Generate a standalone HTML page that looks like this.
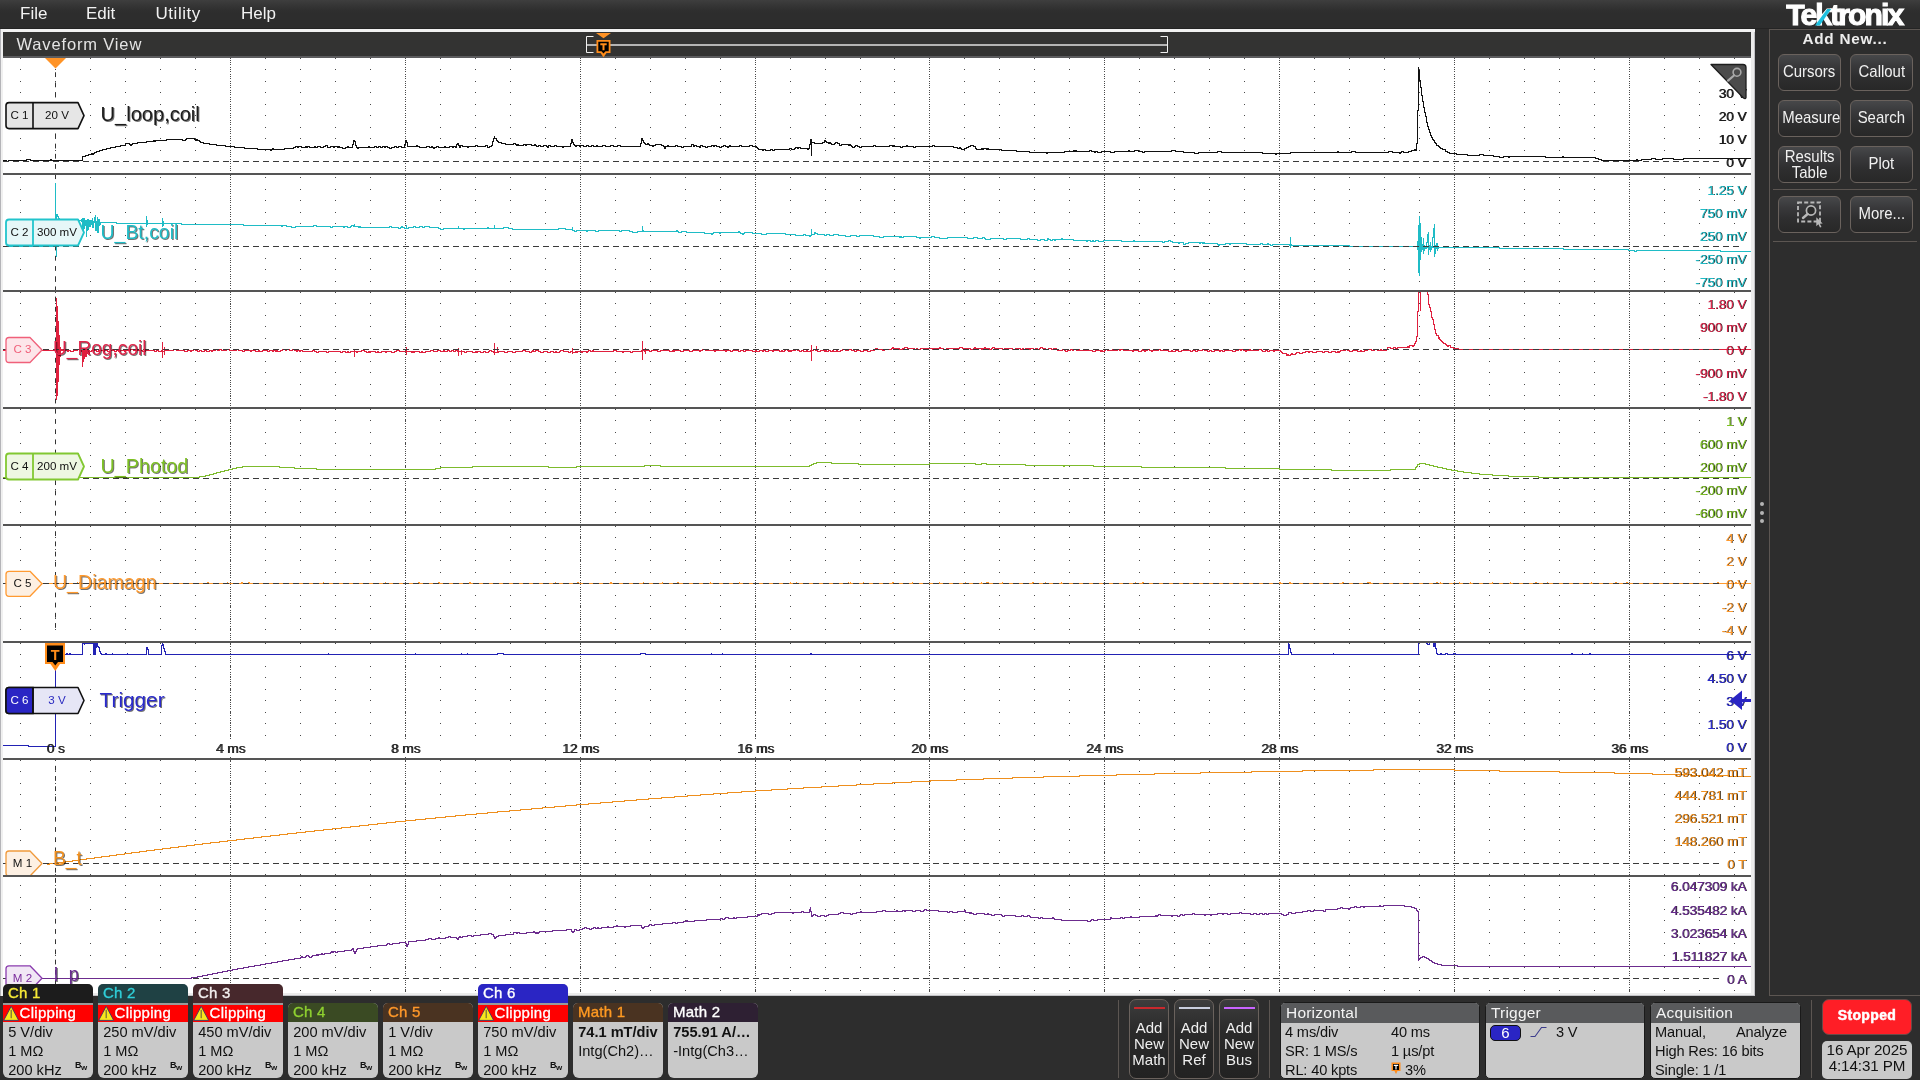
<!DOCTYPE html>
<html><head><meta charset="utf-8"><title>Waveform View</title>
<style>
html,body{margin:0;padding:0}
body{width:1920px;height:1080px;overflow:hidden;position:relative;background:#2d2d2d;font-family:"Liberation Sans", sans-serif;}
div,span{box-sizing:border-box}
body>div,body>svg{will-change:transform}
.abs{position:absolute}
svg text{font-family:"Liberation Sans", sans-serif;}
.yl{font-size:13.7px;letter-spacing:-0.1px}
.sh{filter:drop-shadow(0.75px 0.75px 0 rgba(0,0,0,0.9))}
.bt{font-size:11.6px;}
.gd{stroke:#4a4a4a;stroke-width:1;fill:none;shape-rendering:crispEdges}
.nm{font-size:20.4px}

#menubar{position:absolute;left:0;top:0;width:1920px;height:29px;border-bottom:1px solid #242424;background:linear-gradient(#3e3e3e 0,#363636 5px,#2f2f2f 10px,#2d2d2d 13px,#2d2d2d 100%);}
#menubar span{position:absolute;top:4px;font-size:17px;color:#f2f2f2;line-height:20px;}
#wfborder{position:absolute;left:0;top:29px;width:1755px;height:967px;background:#ececec;border-top:3px solid #f2f2f2;border-left:3px solid #f0f0f0;box-shadow:inset 1px 0 0 #d8d8dc,inset -1px -1px 0 #c2c2c6}
#wfedge{position:absolute;left:0;top:29px;width:1px;height:967px;background:#b4b4b8}
#wftitle{position:absolute;left:3px;top:32px;width:1748px;height:26px;background:#333332;border-bottom:2px solid #5c5c5e;}
#wftitle .t{position:absolute;left:13.5px;top:2px;font-size:16.5px;color:#e4e4e4;line-height:20px;letter-spacing:0.85px}
#side{position:absolute;left:1769px;top:29px;width:160px;height:967px;border:1px solid #5c5652;background:#2d2d2d;}
.sbtn{position:absolute;width:63px;height:37px;border:1px solid #6a625d;border-radius:6px;background:linear-gradient(#47484a,#39393b 30%,#2e2e2f 62%,#282828);color:#f0f0f0;font-size:16.6px;text-align:center;line-height:33px;}
.sbtn span{display:inline-block;transform:scaleX(0.9);transform-origin:50% 50%;white-space:nowrap}
.sep{position:absolute;background:#5c5652;}
.chb{position:absolute;width:90px;border-radius:5px 5px 6px 6px;background:#c9c9c9;overflow:hidden;}
.chb .h{position:absolute;left:0;top:0;width:90px;font-size:15px;line-height:17px;padding-left:5px;letter-spacing:0.25px;-webkit-text-stroke:0.35px}
.chb .clip{position:absolute;left:0;width:90px;height:17px;background:#ff0000;color:#fff;font-size:15px;line-height:15px;padding-left:16.5px;letter-spacing:0.3px;-webkit-text-stroke:0.3px #fff}
.chb .r{position:absolute;left:5.2px;font-size:14.6px;line-height:18px;color:#111;white-space:nowrap}
.chb .bw{position:absolute;left:72px;font-size:9px;color:#111;font-weight:bold;letter-spacing:-0.5px}
.abtn{position:absolute;top:999px;width:40px;height:80px;border:1px solid #6a625d;border-radius:7px;background:linear-gradient(#3d3d3d,#2a2a2a 40%,#222);color:#efefef;font-size:15px;line-height:16px;text-align:center;padding-top:20px;}
.abtn i{position:absolute;left:4px;top:7px;width:31px;height:2px;display:block}
.info{position:absolute;top:1002px;height:77px;border-radius:5px;background:#c9c9c9;overflow:hidden;border:1px solid #1a1a1a}
.info .h{position:absolute;left:0;top:0;width:100%;height:20px;background:#595a5c;color:#f4f4f4;font-size:15.5px;line-height:19px;padding-left:5px;letter-spacing:0.2px}
.info .r{position:absolute;letter-spacing:-0.15px;font-size:14.6px;line-height:18px;color:#111;white-space:nowrap}

</style></head>
<body>
<div id="menubar"><span style="left:20px">File</span><span style="left:86px">Edit</span><span style="left:155.5px;letter-spacing:0.55px">Utility</span><span style="left:241px">Help</span></div>
<div id="wfborder"></div><div id="wfedge"></div>
<div id="wftitle"><span class="t">Waveform View</span></div>
<svg class="abs" style="left:580px;top:32px" width="600" height="26" viewBox="580 32 600 26">
<rect x="586" y="44" width="582" height="2" fill="#b4b4b4"/>
<path d="M593.5 36.5H586.5V52.5H593.5" fill="none" stroke="#f0f0f0" stroke-width="1"/>
<path d="M1160.5 36.5H1167.5V52.5H1160.5" fill="none" stroke="#f0f0f0" stroke-width="1"/>
<path d="M596 33H611L603.5 38.3Z" fill="#ff9326"/>
<path d="M596.5 40H610.5V53H606.5L603.5 57.3L600.5 53H596.5Z" fill="#ff8c1a"/>
<path d="M598.3 41.7H608.7V51.3H605.5L603.5 53.5L601.5 51.3H598.3Z" fill="#000"/>
<path d="M600.3 43.3H606.7V45.2H604.5V50.3H602.5V45.2H600.3Z" fill="#ff8c1a"/>
</svg>
<div id="side"></div>
<svg class="abs" style="left:1780px;top:0" width="130" height="29" viewBox="1780 0 130 29">
<text x="1786.3" y="25" font-size="29.8" font-weight="bold" fill="#fff" stroke="#fff" stroke-width="1.1" letter-spacing="-1.9" textLength="116" lengthAdjust="spacingAndGlyphs">Tektronix</text>
<path d="M1815 25.6L1827.2 9H1831.2L1819.7 25.6Z" fill="#1cc0e0"/>
</svg>
<div class="abs" style="left:1770px;top:30px;width:150px;text-align:center;font-size:15.3px;font-weight:bold;color:#ededed;line-height:18px;letter-spacing:0.75px">Add New...</div>
<div class="sbtn" style="left:1778px;top:54px;"><span>Cursors</span></div>
<div class="sbtn" style="left:1850px;top:54px;"><span>Callout</span></div>
<div class="sbtn" style="left:1778px;top:100px;"><span>Measure</span></div>
<div class="sbtn" style="left:1850px;top:100px;"><span>Search</span></div>
<div class="sbtn" style="left:1778px;top:146px;line-height:16px;padding-top:1.5px;"><span>Results<br>Table</span></div>
<div class="sbtn" style="left:1850px;top:146px;"><span>Plot</span></div>
<div class="sbtn" style="left:1778px;top:196px;"><span></span></div>
<div class="sbtn" style="left:1850px;top:196px;"><span>More...</span></div>
<div class="sep" style="left:1773px;top:189px;width:144px;height:1px"></div>
<div class="sep" style="left:1773px;top:241px;width:144px;height:1px"></div>
<svg class="abs" style="left:1795px;top:200px" width="30" height="30" viewBox="0 0 30 30">
<rect x="3" y="2.5" width="22" height="19" fill="none" stroke="#b8b8b8" stroke-width="1.8" stroke-dasharray="4 2.2"/>
<circle cx="16" cy="10.5" r="4.6" fill="#2a2a2a" stroke="#b8b8b8" stroke-width="1.7"/>
<line x1="12.6" y1="14" x2="8" y2="18" stroke="#b8b8b8" stroke-width="2.4" stroke-linecap="round"/>
<path d="M21.3 17.3V26.2L23.4 24.3L25 27.6L26.5 26.9L24.9 23.7L27.7 23.5Z" fill="#b8b8b8"/>
</svg>
<div class="abs" style="left:1760px;top:502px;width:4px;height:4px;border-radius:2px;background:#b4b4b4"></div>
<div class="abs" style="left:1760px;top:510.5px;width:4px;height:4px;border-radius:2px;background:#b4b4b4"></div>
<div class="abs" style="left:1760px;top:519px;width:4px;height:4px;border-radius:2px;background:#b4b4b4"></div>
<svg id="plot" width="1920" height="1080" viewBox="0 0 1920 1080" style="position:absolute;left:0;top:0">
<defs><clipPath id="pc"><rect x="3" y="58" width="1748" height="935"/></clipPath></defs>
<rect x="3" y="58" width="1748" height="935" fill="#fff"/>
<g clip-path="url(#pc)">
<defs><path id="gr" d="M20 0.5h1M55 0.5h1M90 0.5h1M125 0.5h1M160 0.5h1M195 0.5h1M230 0.5h1M265 0.5h1M300 0.5h1M335 0.5h1M370 0.5h1M405 0.5h1M440 0.5h1M475 0.5h1M510 0.5h1M545 0.5h1M580 0.5h1M615 0.5h1M650 0.5h1M685 0.5h1M720 0.5h1M755 0.5h1M790 0.5h1M825 0.5h1M860 0.5h1M894 0.5h1M929 0.5h1M964 0.5h1M999 0.5h1M1034 0.5h1M1069 0.5h1M1104 0.5h1M1139 0.5h1M1174 0.5h1M1209 0.5h1M1244 0.5h1M1279 0.5h1M1314 0.5h1M1349 0.5h1M1384 0.5h1M1419 0.5h1M1454 0.5h1M1489 0.5h1M1524 0.5h1M1559 0.5h1M1594 0.5h1M1629 0.5h1M1664 0.5h1M1699 0.5h1M1734 0.5h1" class="gd"/></defs>
<use href="#gr" y="58"/>
<use href="#gr" y="69"/>
<use href="#gr" y="81"/>
<use href="#gr" y="92"/>
<use href="#gr" y="104"/>
<use href="#gr" y="115"/>
<use href="#gr" y="127"/>
<use href="#gr" y="138"/>
<use href="#gr" y="150"/>
<use href="#gr" y="177"/>
<use href="#gr" y="189"/>
<use href="#gr" y="200"/>
<use href="#gr" y="212"/>
<use href="#gr" y="223"/>
<use href="#gr" y="235"/>
<use href="#gr" y="258"/>
<use href="#gr" y="269"/>
<use href="#gr" y="281"/>
<use href="#gr" y="292"/>
<use href="#gr" y="303"/>
<use href="#gr" y="315"/>
<use href="#gr" y="326"/>
<use href="#gr" y="338"/>
<use href="#gr" y="361"/>
<use href="#gr" y="372"/>
<use href="#gr" y="384"/>
<use href="#gr" y="395"/>
<use href="#gr" y="409"/>
<use href="#gr" y="420"/>
<use href="#gr" y="432"/>
<use href="#gr" y="443"/>
<use href="#gr" y="455"/>
<use href="#gr" y="466"/>
<use href="#gr" y="489"/>
<use href="#gr" y="501"/>
<use href="#gr" y="512"/>
<use href="#gr" y="526"/>
<use href="#gr" y="537"/>
<use href="#gr" y="549"/>
<use href="#gr" y="560"/>
<use href="#gr" y="572"/>
<use href="#gr" y="595"/>
<use href="#gr" y="606"/>
<use href="#gr" y="618"/>
<use href="#gr" y="629"/>
<use href="#gr" y="643"/>
<use href="#gr" y="654"/>
<use href="#gr" y="666"/>
<use href="#gr" y="677"/>
<use href="#gr" y="689"/>
<use href="#gr" y="700"/>
<use href="#gr" y="712"/>
<use href="#gr" y="723"/>
<use href="#gr" y="735"/>
<use href="#gr" y="760"/>
<use href="#gr" y="771"/>
<use href="#gr" y="783"/>
<use href="#gr" y="794"/>
<use href="#gr" y="806"/>
<use href="#gr" y="817"/>
<use href="#gr" y="829"/>
<use href="#gr" y="840"/>
<use href="#gr" y="852"/>
<use href="#gr" y="874"/>
<use href="#gr" y="885"/>
<use href="#gr" y="897"/>
<use href="#gr" y="909"/>
<use href="#gr" y="920"/>
<use href="#gr" y="932"/>
<use href="#gr" y="943"/>
<use href="#gr" y="955"/>
<use href="#gr" y="967"/>
<use href="#gr" y="990"/>
<defs><path id="gv" d="M0.5 58v1M0.5 60v1M0.5 62v1M0.5 64v1M0.5 67v1M0.5 69v1M0.5 71v1M0.5 74v1M0.5 76v1M0.5 78v1M0.5 81v1M0.5 83v1M0.5 85v1M0.5 87v1M0.5 90v1M0.5 92v1M0.5 94v1M0.5 97v1M0.5 99v1M0.5 101v1M0.5 104v1M0.5 106v1M0.5 108v1M0.5 110v1M0.5 113v1M0.5 115v1M0.5 117v1M0.5 120v1M0.5 122v1M0.5 124v1M0.5 127v1M0.5 129v1M0.5 131v1M0.5 133v1M0.5 136v1M0.5 138v1M0.5 140v1M0.5 143v1M0.5 145v1M0.5 147v1M0.5 150v1M0.5 152v1M0.5 154v1M0.5 156v1M0.5 159v1M0.5 161v1M0.5 163v1M0.5 166v1M0.5 168v1M0.5 170v1M0.5 173v1M0.5 175v1M0.5 177v1M0.5 179v1M0.5 182v1M0.5 184v1M0.5 186v1M0.5 189v1M0.5 191v1M0.5 193v1M0.5 196v1M0.5 198v1M0.5 200v1M0.5 202v1M0.5 205v1M0.5 207v1M0.5 209v1M0.5 212v1M0.5 214v1M0.5 216v1M0.5 219v1M0.5 221v1M0.5 223v1M0.5 225v1M0.5 228v1M0.5 230v1M0.5 232v1M0.5 235v1M0.5 237v1M0.5 239v1M0.5 242v1M0.5 244v1M0.5 246v1M0.5 248v1M0.5 251v1M0.5 253v1M0.5 255v1M0.5 258v1M0.5 260v1M0.5 262v1M0.5 265v1M0.5 267v1M0.5 269v1M0.5 271v1M0.5 274v1M0.5 276v1M0.5 278v1M0.5 281v1M0.5 283v1M0.5 285v1M0.5 288v1M0.5 290v1M0.5 292v1M0.5 294v1M0.5 297v1M0.5 299v1M0.5 301v1M0.5 304v1M0.5 306v1M0.5 308v1M0.5 311v1M0.5 313v1M0.5 315v1M0.5 317v1M0.5 320v1M0.5 322v1M0.5 324v1M0.5 327v1M0.5 329v1M0.5 331v1M0.5 334v1M0.5 336v1M0.5 338v1M0.5 340v1M0.5 343v1M0.5 345v1M0.5 347v1M0.5 350v1M0.5 352v1M0.5 354v1M0.5 357v1M0.5 359v1M0.5 361v1M0.5 363v1M0.5 366v1M0.5 368v1M0.5 370v1M0.5 373v1M0.5 375v1M0.5 377v1M0.5 380v1M0.5 382v1M0.5 384v1M0.5 386v1M0.5 389v1M0.5 391v1M0.5 393v1M0.5 396v1M0.5 398v1M0.5 400v1M0.5 403v1M0.5 405v1M0.5 407v1M0.5 409v1M0.5 412v1M0.5 414v1M0.5 416v1M0.5 419v1M0.5 421v1M0.5 423v1M0.5 426v1M0.5 428v1M0.5 430v1M0.5 432v1M0.5 435v1M0.5 437v1M0.5 439v1M0.5 442v1M0.5 444v1M0.5 446v1M0.5 449v1M0.5 451v1M0.5 453v1M0.5 455v1M0.5 458v1M0.5 460v1M0.5 462v1M0.5 465v1M0.5 467v1M0.5 469v1M0.5 472v1M0.5 474v1M0.5 476v1M0.5 478v1M0.5 481v1M0.5 483v1M0.5 485v1M0.5 488v1M0.5 490v1M0.5 492v1M0.5 495v1M0.5 497v1M0.5 499v1M0.5 501v1M0.5 504v1M0.5 506v1M0.5 508v1M0.5 511v1M0.5 513v1M0.5 515v1M0.5 518v1M0.5 520v1M0.5 522v1M0.5 524v1M0.5 527v1M0.5 529v1M0.5 531v1M0.5 534v1M0.5 536v1M0.5 538v1M0.5 541v1M0.5 543v1M0.5 545v1M0.5 547v1M0.5 550v1M0.5 552v1M0.5 554v1M0.5 557v1M0.5 559v1M0.5 561v1M0.5 564v1M0.5 566v1M0.5 568v1M0.5 570v1M0.5 573v1M0.5 575v1M0.5 577v1M0.5 580v1M0.5 582v1M0.5 584v1M0.5 587v1M0.5 589v1M0.5 591v1M0.5 593v1M0.5 596v1M0.5 598v1M0.5 600v1M0.5 603v1M0.5 605v1M0.5 607v1M0.5 610v1M0.5 612v1M0.5 614v1M0.5 616v1M0.5 619v1M0.5 621v1M0.5 623v1M0.5 626v1M0.5 628v1M0.5 630v1M0.5 633v1M0.5 635v1M0.5 637v1M0.5 639v1M0.5 642v1M0.5 644v1M0.5 646v1M0.5 649v1M0.5 651v1M0.5 653v1M0.5 656v1M0.5 658v1M0.5 660v1M0.5 662v1M0.5 665v1M0.5 667v1M0.5 669v1M0.5 672v1M0.5 674v1M0.5 676v1M0.5 679v1M0.5 681v1M0.5 683v1M0.5 685v1M0.5 688v1M0.5 690v1M0.5 692v1M0.5 695v1M0.5 697v1M0.5 699v1M0.5 702v1M0.5 704v1M0.5 706v1M0.5 708v1M0.5 711v1M0.5 713v1M0.5 715v1M0.5 718v1M0.5 720v1M0.5 722v1M0.5 725v1M0.5 727v1M0.5 729v1M0.5 731v1M0.5 734v1M0.5 736v1M0.5 738v1M0.5 741v1M0.5 743v1M0.5 745v1M0.5 748v1M0.5 750v1M0.5 752v1M0.5 754v1M0.5 757v1M0.5 759v1M0.5 761v1M0.5 764v1M0.5 766v1M0.5 768v1M0.5 771v1M0.5 773v1M0.5 775v1M0.5 777v1M0.5 780v1M0.5 782v1M0.5 784v1M0.5 787v1M0.5 789v1M0.5 791v1M0.5 794v1M0.5 796v1M0.5 798v1M0.5 800v1M0.5 803v1M0.5 805v1M0.5 807v1M0.5 810v1M0.5 812v1M0.5 814v1M0.5 817v1M0.5 819v1M0.5 821v1M0.5 823v1M0.5 826v1M0.5 828v1M0.5 830v1M0.5 833v1M0.5 835v1M0.5 837v1M0.5 840v1M0.5 842v1M0.5 844v1M0.5 846v1M0.5 849v1M0.5 851v1M0.5 853v1M0.5 856v1M0.5 858v1M0.5 860v1M0.5 863v1M0.5 865v1M0.5 867v1M0.5 869v1M0.5 872v1M0.5 874v1M0.5 876v1M0.5 879v1M0.5 881v1M0.5 883v1M0.5 886v1M0.5 888v1M0.5 890v1M0.5 892v1M0.5 895v1M0.5 897v1M0.5 899v1M0.5 902v1M0.5 904v1M0.5 906v1M0.5 909v1M0.5 911v1M0.5 913v1M0.5 915v1M0.5 918v1M0.5 920v1M0.5 922v1M0.5 925v1M0.5 927v1M0.5 929v1M0.5 932v1M0.5 934v1M0.5 936v1M0.5 938v1M0.5 941v1M0.5 943v1M0.5 945v1M0.5 948v1M0.5 950v1M0.5 952v1M0.5 955v1M0.5 957v1M0.5 959v1M0.5 961v1M0.5 964v1M0.5 966v1M0.5 968v1M0.5 971v1M0.5 973v1M0.5 975v1M0.5 978v1M0.5 980v1M0.5 982v1M0.5 984v1M0.5 987v1M0.5 989v1M0.5 991v1" class="gd"/></defs>
<use href="#gv" x="230"/>
<use href="#gv" x="405"/>
<use href="#gv" x="580"/>
<use href="#gv" x="755"/>
<use href="#gv" x="929"/>
<use href="#gv" x="1104"/>
<use href="#gv" x="1279"/>
<use href="#gv" x="1454"/>
<use href="#gv" x="1629"/>
<path d="M55.5 72.25V77.05M55.5 82.45V87.25M55.5 92.65V97.45M55.5 102.85V107.65M55.5 113.05V117.85M55.5 123.25V128.05M55.5 133.45V138.25M55.5 143.65V148.45M55.5 153.85V158.65M55.5 164.05V168.85M55.5 174.25V179.05M55.5 184.45V189.25M55.5 194.65V199.45M55.5 204.85V209.65M55.5 215.05V219.85M55.5 225.25V230.05M55.5 235.45V240.25M55.5 245.65V250.45M55.5 255.85V260.65M55.5 266.05V270.85M55.5 276.25V281.05M55.5 286.45V291.25M55.5 296.65V301.45M55.5 306.85V311.65M55.5 317.05V321.85M55.5 327.25V332.05M55.5 337.45V342.25M55.5 347.65V352.45M55.5 357.85V362.65M55.5 368.05V372.85M55.5 378.25V383.05M55.5 388.45V393.25M55.5 398.65V403.45M55.5 408.85V413.65M55.5 419.05V423.85M55.5 429.25V434.05M55.5 439.45V444.25M55.5 449.65V454.45M55.5 459.85V464.65M55.5 470.05V474.85M55.5 480.25V485.05M55.5 490.45V495.25M55.5 500.65V505.45M55.5 510.85V515.65M55.5 521.05V525.85M55.5 531.25V536.05M55.5 541.45V546.25M55.5 551.65V556.45M55.5 561.85V566.65M55.5 572.05V576.85M55.5 582.25V587.05M55.5 592.45V597.25M55.5 602.65V607.45M55.5 612.85V617.65M55.5 623.05V627.85M55.5 765.85V770.65M55.5 776.05V780.85M55.5 786.25V791.05M55.5 796.45V801.25M55.5 806.65V811.45M55.5 816.85V821.65M55.5 827.05V831.85M55.5 837.25V842.05M55.5 847.45V852.25M55.5 857.65V862.45M55.5 867.85V872.65M55.5 878.05V882.85M55.5 888.25V893.05M55.5 898.45V903.25M55.5 908.65V913.45M55.5 918.85V923.65M55.5 929.05V933.85M55.5 939.25V944.05M55.5 949.45V954.25M55.5 959.65V964.45M55.5 969.85V974.65M55.5 980.05V984.85" stroke="#333" stroke-width="1" fill="none"/>
<line x1="3" y1="161.5" x2="1740" y2="161.5" stroke="#3a3a3a" stroke-width="1" stroke-dasharray="5.5 4.5" shape-rendering="crispEdges"/>
<line x1="3" y1="246.5" x2="1740" y2="246.5" stroke="#3a3a3a" stroke-width="1" stroke-dasharray="5.5 4.5" shape-rendering="crispEdges"/>
<line x1="3" y1="349.5" x2="1740" y2="349.5" stroke="#3a3a3a" stroke-width="1" stroke-dasharray="5.5 4.5" shape-rendering="crispEdges"/>
<line x1="3" y1="478.5" x2="1740" y2="478.5" stroke="#3a3a3a" stroke-width="1" stroke-dasharray="5.5 4.5" shape-rendering="crispEdges"/>
<line x1="3" y1="583.5" x2="1740" y2="583.5" stroke="#3a3a3a" stroke-width="1" stroke-dasharray="5.5 4.5" shape-rendering="crispEdges"/>
<line x1="3" y1="863.5" x2="1740" y2="863.5" stroke="#3a3a3a" stroke-width="1" stroke-dasharray="5.5 4.5" shape-rendering="crispEdges"/>
<line x1="3" y1="978.5" x2="1740" y2="978.5" stroke="#3a3a3a" stroke-width="1" stroke-dasharray="5.5 4.5" shape-rendering="crispEdges"/>
<rect x="1713.5" y="85.1" width="37.8" height="16" fill="#fff"/>
<rect x="1713.5" y="108.1" width="37.8" height="16" fill="#fff"/>
<rect x="1713.5" y="131.1" width="37.8" height="16" fill="#fff"/>
<rect x="1721.0" y="154.1" width="30.3" height="16" fill="#fff"/>
<rect x="1702.3" y="182.1" width="49.0" height="16" fill="#fff"/>
<rect x="1694.7" y="205.1" width="56.6" height="16" fill="#fff"/>
<rect x="1694.7" y="228.1" width="56.6" height="16" fill="#fff"/>
<rect x="1690.2" y="251.1" width="61.1" height="16" fill="#fff"/>
<rect x="1690.2" y="274.1" width="61.1" height="16" fill="#fff"/>
<rect x="1702.3" y="296.1" width="49.0" height="16" fill="#fff"/>
<rect x="1694.7" y="319.1" width="56.6" height="16" fill="#fff"/>
<rect x="1721.0" y="342.1" width="30.3" height="16" fill="#fff"/>
<rect x="1690.2" y="365.1" width="61.1" height="16" fill="#fff"/>
<rect x="1697.8" y="388.1" width="53.5" height="16" fill="#fff"/>
<rect x="1721.0" y="413.1" width="30.3" height="16" fill="#fff"/>
<rect x="1694.7" y="436.1" width="56.6" height="16" fill="#fff"/>
<rect x="1694.7" y="459.1" width="56.6" height="16" fill="#fff"/>
<rect x="1690.2" y="482.1" width="61.1" height="16" fill="#fff"/>
<rect x="1690.2" y="505.1" width="61.1" height="16" fill="#fff"/>
<rect x="1721.0" y="530.1" width="30.3" height="16" fill="#fff"/>
<rect x="1721.0" y="553.1" width="30.3" height="16" fill="#fff"/>
<rect x="1721.0" y="576.1" width="30.3" height="16" fill="#fff"/>
<rect x="1716.6" y="599.1" width="34.7" height="16" fill="#fff"/>
<rect x="1716.6" y="622.1" width="34.7" height="16" fill="#fff"/>
<rect x="1721.0" y="647.1" width="30.3" height="16" fill="#fff"/>
<rect x="1702.3" y="670.1" width="49.0" height="16" fill="#fff"/>
<rect x="1721.0" y="693.1" width="30.3" height="16" fill="#fff"/>
<rect x="1702.3" y="716.1" width="49.0" height="16" fill="#fff"/>
<rect x="1721.0" y="739.1" width="30.3" height="16" fill="#fff"/>
<rect x="1669.2" y="764.1" width="82.1" height="16" fill="#fff"/>
<rect x="1669.2" y="787.1" width="82.1" height="16" fill="#fff"/>
<rect x="1669.2" y="810.1" width="82.1" height="16" fill="#fff"/>
<rect x="1669.2" y="833.1" width="82.1" height="16" fill="#fff"/>
<rect x="1722.1" y="856.1" width="29.2" height="16" fill="#fff"/>
<rect x="1665.5" y="878.1" width="85.8" height="16" fill="#fff"/>
<rect x="1665.5" y="902.1" width="85.8" height="16" fill="#fff"/>
<rect x="1665.5" y="925.1" width="85.8" height="16" fill="#fff"/>
<rect x="1666.5" y="948.1" width="84.8" height="16" fill="#fff"/>
<rect x="1721.8" y="971.1" width="29.5" height="16" fill="#fff"/>
<rect x="43.5" y="740.1" width="24.0" height="16" fill="#fff"/>
<rect x="212.9" y="740.1" width="35.3" height="16" fill="#fff"/>
<rect x="387.9" y="740.1" width="35.3" height="16" fill="#fff"/>
<rect x="559.1" y="740.1" width="42.8" height="16" fill="#fff"/>
<rect x="734.1" y="740.1" width="42.8" height="16" fill="#fff"/>
<rect x="908.1" y="740.1" width="42.8" height="16" fill="#fff"/>
<rect x="1083.1" y="740.1" width="42.8" height="16" fill="#fff"/>
<rect x="1258.1" y="740.1" width="42.8" height="16" fill="#fff"/>
<rect x="1433.1" y="740.1" width="42.8" height="16" fill="#fff"/>
<rect x="1608.1" y="740.1" width="42.8" height="16" fill="#fff"/>
<path d="M3 160.5H6M6.5 160V162M7 161.5H8M8.5 160V162M9 160.5H26M26.5 159V161M27 159.5H30M30.5 159V161M31 160.5H50M50.5 159V161M51.5 159V161M52 160.5H64M64.5 160V162M65.5 160V162M66 160.5H82M82.5 156V161M83 156.5H85M85.5 155V157M86 155.5H88M88.5 154V156M89 154.5H91M91.5 153V155M92.5 153V155M93.5 153V155M94.5 152V154M95 152.5H96M96.5 151V153M97 151.5H99M99.5 150V152M100 150.5H102M102.5 149V151M103 149.5H106M106.5 148V150M107 148.5H110M110.5 147V149M111 147.5H115M115.5 146V148M116 146.5H120M120.5 145V147M121 145.5H125M125.5 143V146M126 143.5H129M129.5 143V145M130.5 144V146M131.5 144V146M132.5 143V145M133 143.5H137M137.5 142V144M138 142.5H146M146.5 141V143M147 141.5H153M153.5 140V142M154.5 140V142M155.5 140V142M156 140.5H166M166.5 139V141M167 139.5H182M182.5 139V141M183 140.5H185M185.5 139V141M186.5 138V140M187 138.5H194M194.5 138V140M195.5 139V141M196.5 139V141M197.5 139V141M198 140.5H199M199.5 140V142M200.5 141V143M201 142.5H203M203.5 142V144M204 143.5H209M209.5 143V145M210 144.5H216M216.5 144V146M217 145.5H225M225.5 145V147M226 146.5H234M234.5 146V148M235 147.5H244M244.5 147V149M245 148.5H257M257.5 148V150M258 149.5H270M270.5 149V151M271.5 149V151M272.5 148V150M273.5 148V150M274 149.5H284M284.5 148V150M285 148.5H293M293.5 147V149M294 147.5H295M295.5 146V148M296 146.5H297M297.5 146V148M298.5 146V148M299 146.5H301M301.5 146V148M302 147.5H305M305.5 146V148M306.5 146V148M307.5 146V148M308 146.5H309M309.5 146V148M310 147.5H314M314.5 146V148M315.5 146V148M316 147.5H317M317.5 146V148M318 146.5H320M320.5 146V148M321 147.5H323M323.5 146V148M324 146.5H325M325.5 145V147M326 145.5H327M327.5 145V148M328 147.5H330M330.5 146V148M331 146.5H333M333.5 146V148M334.5 146V148M335 146.5H337M337.5 146V148M338.5 146V148M339.5 146V148M340 147.5H342M342.5 147V149M343 148.5H345M345.5 147V149M346 147.5H347M347.5 146V148M348.5 146V148M349 147.5H352M352.5 144V148M353.5 140V145M354.5 140V142M355.5 141V146M356.5 145V148M357.5 147V149M358.5 147V149M359 147.5H368M368.5 146V148M369.5 146V148M370 147.5H374M374.5 146V148M375 146.5H376M376.5 146V148M377 147.5H378M378.5 146V148M379 146.5H380M380.5 146V148M381 147.5H382M382.5 146V148M383 146.5H384M384.5 146V148M385.5 146V148M386 146.5H387M387.5 146V148M388 147.5H389M389.5 147V149M390 148.5H391M391.5 147V149M392 147.5H394M394.5 146V148M395 146.5H396M396.5 146V148M397 147.5H398M398.5 146V148M399 146.5H401M401.5 146V148M402 147.5H404M404.5 144V148M405.5 140V145M406.5 140V143M407.5 142V147M408 146.5H416M416.5 145V147M417.5 145V147M418 146.5H419M419.5 146V148M420 147.5H426M426.5 146V148M427 146.5H429M429.5 146V148M430 147.5H431M431.5 146V148M432.5 146V148M433.5 147V149M434.5 147V149M435 147.5H436M436.5 146V148M437 146.5H438M438.5 146V148M439 147.5H444M444.5 146V148M445.5 146V148M446 147.5H449M449.5 146V148M450 146.5H452M452.5 146V148M453.5 146V148M454 146.5H455M455.5 146V148M456.5 144V148M457.5 143V145M458.5 143V146M459.5 145V148M460.5 145V148M461 145.5H462M462.5 145V147M463 146.5H467M467.5 146V148M468.5 146V148M469 146.5H475M475.5 145V147M476 145.5H477M477.5 145V147M478 146.5H485M485.5 145V147M486 145.5H487M487.5 145V148M488 147.5H489M489.5 146V148M490 146.5H491M491.5 145V147M492.5 141V146M493.5 138V142M494.5 136V139M495 138.5H496M496.5 138V141M497.5 140V142M498.5 141V143M499 142.5H501M501.5 142V144M502 143.5H505M505.5 143V145M506 144.5H513M513.5 143V145M514 143.5H515M515.5 143V145M516.5 144V146M517.5 144V146M518.5 144V146M519 145.5H523M523.5 144V146M524 144.5H525M525.5 144V146M526.5 144V146M527 144.5H531M531.5 144V146M532 145.5H534M534.5 144V146M535.5 144V146M536.5 145V147M537 146.5H538M538.5 145V147M539 145.5H540M540.5 145V147M541 146.5H543M543.5 145V147M544 145.5H546M546.5 145V147M547.5 146V148M548.5 145V148M549 145.5H550M550.5 145V147M551 146.5H554M554.5 145V147M555 145.5H556M556.5 145V147M557 146.5H562M562.5 146V148M563.5 146V148M564 146.5H570M570.5 143V147M571.5 139V144M572.5 139V143M573.5 142V145M574.5 144V146M575.5 145V147M576.5 145V147M577 145.5H579M579.5 145V147M580.5 145V147M581 145.5H583M583.5 145V147M584 146.5H586M586.5 145V147M587 145.5H588M588.5 145V147M589 146.5H591M591.5 145V147M592 145.5H593M593.5 145V147M594 146.5H596M596.5 145V147M597.5 145V147M598 146.5H602M602.5 145V147M603 145.5H605M605.5 145V147M606 146.5H610M610.5 145V147M611 145.5H613M613.5 145V147M614 146.5H617M617.5 145V147M618 145.5H620M620.5 145V147M621 146.5H640M640.5 143V147M641.5 138V144M642.5 138V141M643.5 140V143M644.5 142V144M645.5 143V145M646 144.5H647M647.5 143V145M648.5 143V145M649.5 144V146M650 145.5H652M652.5 145V147M653.5 145V147M654 145.5H655M655.5 144V146M656 144.5H661M661.5 144V146M662 145.5H663M663.5 145V147M664.5 146V149M665.5 146V149M666 146.5H667M667.5 145V147M668.5 145V147M669 146.5H675M675.5 145V147M676 145.5H677M677.5 145V147M678 146.5H681M681.5 146V148M682 147.5H683M683.5 146V148M684 146.5H691M691.5 144V147M692 144.5H693M693.5 144V147M694.5 145V147M695 145.5H696M696.5 145V147M697 146.5H699M699.5 146V148M700.5 145V148M701 145.5H702M702.5 145V147M703 146.5H705M705.5 146V148M706 147.5H707M707.5 146V148M708 146.5H711M711.5 145V147M712 145.5H713M713.5 145V147M714.5 145V147M715 145.5H716M716.5 145V147M717 146.5H719M719.5 146V148M720 147.5H721M721.5 146V148M722 146.5H723M723.5 145V147M724 145.5H725M725.5 145V147M726 146.5H727M727.5 146V148M728.5 146V148M729.5 145V147M730.5 145V147M731 146.5H739M739.5 145V147M740 145.5H741M741.5 145V147M742 146.5H749M749.5 145V147M750 145.5H752M752.5 145V147M753 146.5H756M756.5 146V148M757.5 147V149M758.5 148V150M759 149.5H762M762.5 149V151M763.5 149V151M764 149.5H765M765.5 149V151M766 150.5H770M770.5 149V151M771 149.5H772M772.5 149V151M773 150.5H774M774.5 149V151M775 149.5H789M789.5 148V150M790 148.5H791M791.5 148V150M792 149.5H794M794.5 148V150M795.5 147V149M796 147.5H797M797.5 147V149M798.5 147V149M799 147.5H800M800.5 147V149M801 148.5H807M807.5 148V150M808.5 148V150M809.5 144V149M810.5 139V145M811.5 139V156M812 142.5H814M814.5 142V144M815 143.5H822M822.5 142V144M823 142.5H824M824.5 140V143M825.5 140V142M826.5 141V143M827 142.5H828M828.5 142V144M829.5 142V144M830.5 142V144M831.5 143V145M832 144.5H834M834.5 143V145M835.5 142V144M836 142.5H837M837.5 142V144M838 143.5H839M839.5 143V146M840 145.5H841M841.5 144V146M842 144.5H848M848.5 144V146M849.5 144V146M850.5 144V146M851.5 145V147M852.5 146V148M853 147.5H854M854.5 146V148M855.5 145V147M856 145.5H857M857.5 145V147M858 146.5H859M859.5 146V148M860 147.5H861M861.5 146V148M862 146.5H873M873.5 145V147M874 145.5H875M875.5 145V147M876 146.5H889M889.5 145V147M890 145.5H892M892.5 145V147M893.5 145V147M894.5 145V147M895 146.5H900M900.5 146V148M901 147.5H902M902.5 146V148M903 146.5H906M906.5 145V147M907.5 145V147M908 146.5H913M913.5 146V148M914 147.5H915M915.5 146V148M916 146.5H932M932.5 145V147M933 145.5H934M934.5 145V147M935 146.5H953M953.5 146V148M954 147.5H957M957.5 147V149M958 148.5H959M959.5 147V149M960.5 147V149M961.5 148V150M962 149.5H964M964.5 148V150M965 148.5H966M966.5 147V149M967 147.5H968M968.5 146V148M969 146.5H970M970.5 145V147M971 145.5H973M973.5 145V147M974 146.5H975M975.5 146V149M976.5 148V150M977 149.5H981M981.5 148V150M982.5 148V150M983.5 148V150M984 148.5H986M986.5 148V150M987.5 148V150M988.5 148V150M989 149.5H1001M1001.5 149V151M1002 150.5H1016M1016.5 150V152M1017 151.5H1029M1029.5 151V153M1030 152.5H1046M1046.5 152V154M1047.5 152V154M1048 152.5H1064M1064.5 151V153M1065 151.5H1073M1073.5 150V152M1074.5 150V152M1075.5 150V152M1076.5 150V152M1077 151.5H1089M1089.5 150V152M1090 150.5H1091M1091.5 150V152M1092 151.5H1094M1094.5 151V153M1095.5 151V153M1096 151.5H1097M1097.5 151V153M1098 152.5H1101M1101.5 151V153M1102 151.5H1110M1110.5 151V153M1111 152.5H1114M1114.5 151V153M1115 151.5H1128M1128.5 150V152M1129.5 150V152M1130 151.5H1134M1134.5 150V152M1135 150.5H1138M1138.5 150V152M1139 151.5H1142M1142.5 151V153M1143 152.5H1144M1144.5 151V153M1145 151.5H1171M1171.5 150V152M1172 150.5H1175M1175.5 150V152M1176 151.5H1183M1183.5 151V153M1184 152.5H1194M1194.5 152V154M1195 153.5H1198M1198.5 152V154M1199 152.5H1217M1217.5 151V153M1218 151.5H1221M1221.5 151V153M1222 152.5H1262M1262.5 152V154M1263 153.5H1275M1275.5 153V155M1276.5 153V155M1277 153.5H1290M1290.5 152V154M1291 152.5H1337M1337.5 151V153M1338.5 151V153M1339 152.5H1351M1351.5 151V153M1352 151.5H1355M1355.5 151V153M1356 152.5H1388M1388.5 151V153M1389 151.5H1392M1392.5 151V153M1393 152.5H1399M1399.5 152V154M1400.5 152V154M1401.5 151V153M1402 151.5H1403M1403.5 151V153M1404 152.5H1408M1408.5 151V153M1409 151.5H1411M1411.5 150V152M1412 150.5H1414M1414.5 149V151M1415.5 149V151M1416.5 143V151M1417.5 110V144M1418.5 67V111M1419.5 70V81M1420.5 80V88M1421.5 87V96M1422.5 95V102M1423.5 101V108M1424.5 107V113M1425.5 112V117M1426.5 116V123M1427.5 122V127M1428.5 126V130M1429.5 129V133M1430.5 132V136M1431.5 135V138M1432.5 137V140M1433.5 139V141M1434.5 140V143M1435.5 142V144M1436.5 143V146M1437 145.5H1438M1438.5 145V147M1439.5 146V148M1440.5 147V149M1441 148.5H1442M1442.5 148V150M1443 149.5H1445M1445.5 149V152M1446 151.5H1447M1447.5 151V153M1448 152.5H1449M1449.5 152V154M1450 153.5H1456M1456.5 153V155M1457 154.5H1467M1467.5 154V156M1468 155.5H1479M1479.5 154V156M1480 154.5H1483M1483.5 154V156M1484 155.5H1493M1493.5 155V157M1494 156.5H1499M1499.5 156V158M1500 157.5H1503M1503.5 156V158M1504 156.5H1508M1508.5 156V158M1509.5 156V158M1510 156.5H1545M1545.5 156V158M1546 157.5H1562M1562.5 156V158M1563.5 156V158M1564 157.5H1595M1595.5 157V159M1596 158.5H1598M1598.5 158V160M1599 159.5H1601M1601.5 159V161M1602 160.5H1636M1636.5 159V161M1637.5 159V161M1638 160.5H1641M1641.5 159V161M1642 159.5H1651M1651.5 158V160M1652 158.5H1655M1655.5 158V160M1656 159.5H1662M1662.5 158V160M1663 158.5H1673M1673.5 158V160M1674 159.5H1683M1683.5 158V160M1684 158.5H1730M1730.5 158V160M1731.5 158V160M1732 158.5H1751" fill="none" stroke="#111" stroke-width="1" shape-rendering="crispEdges" />
<path d="M3 246.5H55M55.5 183V247M56.5 214V257M57.5 214V217M58.5 216V219M59.5 218V220M60 219.5H61M61.5 219V221M62 220.5H84M84.5 220V222M85 221.5H94M94.5 221V223M95 222.5H116M116.5 222V224M117 223.5H146M146.5 216V227M147.5 220V225M148 223.5H162M162.5 218V227M163.5 221V226M164 223.5H181M181.5 223V225M182 224.5H243M243.5 224V226M244 225.5H281M281.5 225V227M282.5 225V227M283 225.5H286M286.5 225V227M287 226.5H291M291.5 226V228M292 227.5H295M295.5 226V228M296 226.5H313M313.5 225V227M314 225.5H316M316.5 225V227M317 226.5H330M330.5 226V228M331 227.5H332M332.5 226V228M333 226.5H343M343.5 226V228M344.5 226V228M345 226.5H347M347.5 226V228M348 227.5H350M350.5 226V228M351.5 225V227M352 225.5H353M353.5 225V227M354.5 224V227M355 226.5H358M358.5 226V228M359.5 226V228M360.5 226V228M361 227.5H389M389.5 226V228M390 226.5H391M391.5 226V228M392 227.5H398M398.5 227V229M399 228.5H400M400.5 227V229M401.5 226V228M402.5 226V228M403 227.5H404M404.5 227V229M405 228.5H406M406.5 225V229M407 228.5H408M408.5 227V229M409 227.5H413M413.5 226V228M414 226.5H415M415.5 226V228M416 227.5H419M419.5 226V228M420 226.5H422M422.5 226V228M423 227.5H424M424.5 226V228M425 226.5H429M429.5 226V228M430 227.5H438M438.5 227V229M439 228.5H440M440.5 228V230M441 229.5H443M443.5 228V230M444 228.5H458M458.5 226V229M459 228.5H463M463.5 228V230M464.5 228V230M465 228.5H487M487.5 227V229M488.5 227V229M489 228.5H494M494.5 225V229M495 228.5H503M503.5 227V229M504 227.5H508M508.5 227V229M509 228.5H512M512.5 228V230M513 229.5H558M558.5 228V230M559 228.5H565M565.5 228V230M566 229.5H572M572.5 227V231M573 230.5H574M574.5 230V232M575 231.5H576M576.5 230V232M577 230.5H586M586.5 230V232M587.5 230V232M588 230.5H595M595.5 230V232M596 231.5H598M598.5 230V232M599 230.5H619M619.5 230V232M620 231.5H621M621.5 230V232M622 230.5H629M629.5 230V232M630 231.5H632M632.5 231V233M633 232.5H637M637.5 231V233M638 231.5H642M642.5 226V232M643.5 230V232M644 231.5H676M676.5 230V232M677.5 230V232M678.5 231V233M679 232.5H681M681.5 231V233M682 231.5H686M686.5 231V233M687 232.5H704M704.5 232V234M705 233.5H711M711.5 233V235M712.5 233V235M713.5 232V234M714 232.5H719M719.5 232V234M720.5 232V234M721 232.5H738M738.5 231V233M739.5 231V233M740.5 232V234M741 233.5H742M742.5 233V235M743.5 233V235M744.5 232V234M745 232.5H752M752.5 232V234M753 233.5H761M761.5 233V235M762 234.5H766M766.5 233V235M767 233.5H785M785.5 233V235M786 234.5H795M795.5 234V236M796 235.5H803M803.5 234V236M804 234.5H805M805.5 234V236M806 235.5H809M809.5 235V237M810.5 235V237M811.5 229V236M812 234.5H814M814.5 232V235M815.5 232V234M816 233.5H817M817.5 233V235M818 234.5H824M824.5 234V236M825 235.5H826M826.5 234V236M827 234.5H829M829.5 234V236M830 235.5H833M833.5 234V236M834 234.5H838M838.5 234V236M839 235.5H845M845.5 235V237M846 236.5H850M850.5 235V237M851 235.5H856M856.5 235V237M857 236.5H859M859.5 235V237M860 235.5H873M873.5 235V237M874 236.5H879M879.5 236V238M880 237.5H883M883.5 236V238M884 236.5H899M899.5 236V238M900.5 236V238M901.5 236V238M902 237.5H903M903.5 236V238M904 236.5H916M916.5 236V238M917 237.5H919M919.5 237V239M920.5 237V239M921 237.5H931M931.5 236V238M932 236.5H934M934.5 236V238M935 237.5H939M939.5 237V239M940 238.5H947M947.5 237V239M948 237.5H967M967.5 237V239M968 238.5H973M973.5 237V239M974 237.5H977M977.5 237V239M978 238.5H982M982.5 237V239M983 237.5H984M984.5 237V239M985.5 238V240M986 239.5H990M990.5 238V240M991 238.5H1003M1003.5 238V240M1004 239.5H1006M1006.5 238V240M1007 238.5H1020M1020.5 238V240M1021 239.5H1027M1027.5 238V240M1028 238.5H1029M1029.5 238V240M1030 239.5H1037M1037.5 239V241M1038 240.5H1040M1040.5 239V241M1041 239.5H1044M1044.5 239V241M1045 240.5H1047M1047.5 238V241M1048.5 238V240M1049 239.5H1050M1050.5 239V241M1051 240.5H1052M1052.5 239V241M1053 239.5H1054M1054.5 239V241M1055.5 239V241M1056 239.5H1061M1061.5 238V240M1062.5 238V240M1063 239.5H1073M1073.5 239V241M1074 240.5H1086M1086.5 240V242M1087.5 240V242M1088 240.5H1090M1090.5 240V242M1091 241.5H1092M1092.5 240V242M1093.5 240V242M1094 241.5H1095M1095.5 240V242M1096 240.5H1098M1098.5 240V242M1099 241.5H1103M1103.5 240V242M1104 240.5H1121M1121.5 240V242M1122 241.5H1133M1133.5 240V242M1134.5 240V242M1135 241.5H1162M1162.5 241V243M1163 242.5H1164M1164.5 241V243M1165 241.5H1168M1168.5 240V242M1169 240.5H1170M1170.5 240V242M1171 241.5H1172M1172.5 241V243M1173 242.5H1178M1178.5 242V244M1179.5 242V244M1180 242.5H1183M1183.5 242V245M1184 244.5H1185M1185.5 243V245M1186 243.5H1188M1188.5 242V244M1189 242.5H1199M1199.5 242V244M1200.5 242V244M1201 242.5H1202M1202.5 242V244M1203.5 242V244M1204.5 242V244M1205 243.5H1217M1217.5 243V245M1218.5 244V246M1219.5 244V246M1220 244.5H1225M1225.5 243V245M1226 243.5H1229M1229.5 243V245M1230.5 243V245M1231 243.5H1246M1246.5 243V245M1247 244.5H1260M1260.5 243V245M1261 243.5H1262M1262.5 243V245M1263 244.5H1267M1267.5 243V245M1268.5 243V245M1269 244.5H1270M1270.5 244V246M1271 245.5H1272M1272.5 244V246M1273 244.5H1289M1289.5 244V246M1290.5 237V248M1291.5 244V246M1292 245.5H1349M1349.5 245V247M1350 246.5H1426M1426.5 246V248M1427 247.5H1428M1428.5 246V248M1429 246.5H1431M1431.5 246V248M1432 247.5H1436M1436.5 245V249M1437 247.5H1499M1499.5 247V249M1500 248.5H1563M1563.5 248V250M1564 249.5H1628M1628.5 249V251M1629 250.5H1634M1634.5 250V252M1635 251.5H1636M1636.5 250V252M1637 250.5H1720M1720.5 250V252M1721 251.5H1751" fill="none" stroke="#1fbcc6" stroke-width="1" shape-rendering="crispEdges" />
<path d="M81.5 219V222M82.5 218V233M83.5 218V233M84.5 218V229M85.5 220V226M86.5 220V237M87.5 219V231M88.5 219V230M89.5 220V227M90.5 220V227M91.5 220V225M92.5 218V228M93.5 222V228M94.5 217V223M95.5 215V231M96.5 221V231M97.5 217V233M98.5 219V233M99.5 219V226M100.5 222V225" fill="none" stroke="#1fbcc6" stroke-width="1" shape-rendering="crispEdges" />
<path d="M1417.5 241V250M1418.5 225V273M1419.5 216V276M1420.5 223V260M1421.5 237V252M1422.5 244V250M1423.5 238V254M1424.5 245V251M1425.5 246V249M1426.5 242V249M1427.5 234V243M1428.5 232V255M1429.5 245V250M1430.5 242V252M1431.5 246V250M1432.5 237V248M1433.5 228V238M1434.5 224V257M1435.5 245V254M1436.5 243V249M1437.5 243V251M1438.5 246V249" fill="none" stroke="#1fbcc6" stroke-width="1" shape-rendering="crispEdges" />
<path d="M3 477.5H199M199.5 476V478M200 476.5H205M205.5 475V477M206 475.5H209M209.5 474V476M210 474.5H213M213.5 473V475M214 473.5H216M216.5 472V474M217 472.5H220M220.5 471V473M221 471.5H224M224.5 470V472M225 470.5H228M228.5 469V471M229 469.5H232M232.5 468V470M233 468.5H236M236.5 467V469M237 467.5H242M242.5 466V468M243 466.5H279M279.5 466V468M280 467.5H294M294.5 467V469M295 468.5H316M316.5 468V470M317 469.5H435M435.5 468V470M436 468.5H440M440.5 467V469M441 467.5H472M472.5 466V468M473 466.5H548M548.5 466V468M549 467.5H576M576.5 466V468M577 466.5H644M644.5 465V467M645 465.5H660M660.5 465V467M661 466.5H809M809.5 465V467M810 465.5H811M811.5 464V466M812 464.5H813M813.5 463V465M814 463.5H816M816.5 462V464M817 462.5H831M831.5 462V464M832 463.5H858M858.5 463V465M859 464.5H929M929.5 463V465M930 463.5H975M975.5 463V465M976 464.5H981M981.5 463V465M982 463.5H986M986.5 463V465M987 464.5H1025M1025.5 464V466M1026 465.5H1063M1063.5 465V467M1064.5 465V467M1065 465.5H1093M1093.5 465V467M1094 466.5H1141M1141.5 466V468M1142 467.5H1225M1225.5 467V469M1226 468.5H1279M1279.5 468V470M1280 469.5H1331M1331.5 469V471M1332 470.5H1390M1390.5 469V471M1391 469.5H1415M1415.5 467V470M1416.5 466V468M1417.5 464V467M1418 464.5H1419M1419.5 463V465M1420 463.5H1425M1425.5 463V465M1426 464.5H1429M1429.5 464V466M1430 465.5H1433M1433.5 465V467M1434 466.5H1437M1437.5 466V468M1438 467.5H1442M1442.5 467V469M1443 468.5H1446M1446.5 468V470M1447 469.5H1451M1451.5 469V471M1452 470.5H1457M1457.5 470V472M1458 471.5H1463M1463.5 471V473M1464 472.5H1471M1471.5 472V474M1472 473.5H1479M1479.5 473V475M1480 474.5H1492M1492.5 474V476M1493 475.5H1508M1508.5 475V477M1509 476.5H1538M1538.5 476V478M1539 477.5H1751" fill="none" stroke="#7dbb2c" stroke-width="1" shape-rendering="crispEdges" />
<line x1="42" y1="583.5" x2="1751" y2="583.5" stroke="#ff9a2e" stroke-width="1" shape-rendering="crispEdges"/>
<path d="M469 582.5h2M988 582.5h1M1440 582.5h1M1459 582.5h1M1616 582.5h1M981 582.5h1M1289 582.5h2M939 582.5h1M1045 582.5h1M710 582.5h1M739 582.5h1M1492 582.5h1M965 582.5h1M863 582.5h1M643 582.5h1M677 582.5h2M385 582.5h1M796 582.5h1M850 582.5h1M1717 582.5h2M1436 582.5h2M241 582.5h2M1717 582.5h1M1626 582.5h2M790 582.5h1M1591 582.5h1M248 582.5h2M1367 582.5h2M662 582.5h1M892 582.5h2M1342 582.5h2M77 582.5h1M1454 582.5h1M1735 582.5h2M1142 582.5h2M227 582.5h1M1615 582.5h1M1470 582.5h1M610 582.5h2M207 582.5h2M1510 582.5h1M1002 582.5h1M438 582.5h2M848 582.5h1M418 582.5h2M150 582.5h1M577 582.5h2M1061 582.5h1M986 582.5h2M555 582.5h1M1369 582.5h2M1135 582.5h1M1547 582.5h1M249 582.5h1M1535 582.5h2M79 582.5h2M323 582.5h1M1279 582.5h2M912 582.5h1M1032 582.5h2" stroke="#ff9a2e" stroke-width="1" fill="none" shape-rendering="crispEdges"/>
<line x1="3" y1="583.5" x2="1722" y2="583.5" stroke="#3a3a3a" stroke-width="1" stroke-dasharray="5.5 4.5" shape-rendering="crispEdges"/>
<path d="M3 745.5H28M28.5 745V747M29 746.5H55M55.5 654V747M56 654.5H66M66.5 653V655M67.5 653V655M68 654.5H69M69.5 653V655M70.5 653V655M71 654.5H82M82.5 643V655M83 643.5H84M84.5 643V645M85 643.5H93M93.5 643V655M94.5 643V655M95.5 643V655M96.5 643V648M97.5 643V647M98.5 646V648M99.5 647V652M100.5 651V654M101.5 653V655M102 654.5H105M105.5 653V655M106.5 653V655M107 654.5H112M112.5 653V655M113 654.5H127M127.5 653V655M128 654.5H146M146.5 647V655M147.5 647V650M148.5 649V655M149 654.5H161M161.5 645V655M162.5 643V646M163.5 644V649M164.5 648V652M165.5 651V655M166 654.5H328M328.5 653V655M329 654.5H415M415.5 653V655M416 654.5H461M461.5 653V655M462 654.5H467M467.5 653V655M468 654.5H497M497.5 653V655M498 653.5H503M503.5 653V655M504 654.5H640M640.5 653V655M641 653.5H645M645.5 653V655M646 654.5H711M711.5 653V655M712 654.5H722M722.5 653V655M723 654.5H810M810.5 653V655M811.5 653V655M812 654.5H1288M1288.5 643V655M1289.5 644V649M1290.5 648V653M1291.5 652V655M1292 654.5H1333M1333.5 653V655M1334 654.5H1418M1418.5 642V655M1419 642.5H1426M1426.5 642V644M1427.5 643V645M1428 644.5H1429M1429.5 642V645M1430 642.5H1433M1433.5 642V647M1434.5 643V647M1435.5 643V649M1436.5 648V654M1437.5 653V655M1438 654.5H1440M1440.5 653V655M1441.5 653V655M1442 654.5H1445M1445.5 653V655M1446 653.5H1447M1447.5 653V655M1448 654.5H1453M1453.5 653V655M1454 653.5H1455M1455.5 653V655M1456 654.5H1571M1571.5 653V655M1572.5 653V655M1573 654.5H1582M1582.5 653V655M1583 654.5H1589M1589.5 653V655M1590.5 653V655M1591 654.5H1751" fill="none" stroke="#2222b4" stroke-width="1" shape-rendering="crispEdges" />
<path d="M47 864.5H49M49.5 863V865M50 863.5H57M57.5 862V864M58 862.5H65M65.5 861V863M66 861.5H72M72.5 860V862M73 860.5H79M79.5 859V861M80 859.5H86M86.5 858V860M87 858.5H94M94.5 857V859M95 857.5H101M101.5 856V858M102 856.5H109M109.5 855V857M110 855.5H116M116.5 854V856M117 854.5H124M124.5 853V855M125 853.5H131M131.5 852V854M132 852.5H139M139.5 851V853M140 851.5H146M146.5 850V852M147 850.5H154M154.5 849V851M155 849.5H162M162.5 848V850M163 848.5H170M170.5 847V849M171 847.5H178M178.5 846V848M179 846.5H186M186.5 845V847M187 845.5H194M194.5 844V846M195 844.5H202M202.5 843V845M203 843.5H210M210.5 842V844M211 842.5H219M219.5 841V843M220 841.5H227M227.5 840V842M228 840.5H236M236.5 839V841M237 839.5H244M244.5 838V840M245 838.5H253M253.5 837V839M254 837.5H261M261.5 836V838M262 836.5H270M270.5 835V837M271 835.5H279M279.5 834V836M280 834.5H287M287.5 833V835M288 833.5H296M296.5 832V834M297 832.5H305M305.5 831V833M306 831.5H314M314.5 830V832M315 830.5H323M323.5 829V831M324 829.5H332M332.5 828V830M333 828.5H341M341.5 827V829M342 827.5H350M350.5 826V828M351 826.5H359M359.5 825V827M360 825.5H368M368.5 824V826M369 824.5H377M377.5 823V825M378 823.5H386M386.5 822V824M387 822.5H395M395.5 821V823M396 821.5H405M405.5 820V822M406 820.5H415M415.5 819V821M416 819.5H425M425.5 818V820M426 818.5H435M435.5 817V819M436 817.5H445M445.5 816V818M446 816.5H455M455.5 815V817M456 815.5H465M465.5 814V816M466 814.5H476M476.5 813V815M477 813.5H487M487.5 812V814M488 812.5H497M497.5 811V813M498 811.5H509M509.5 810V812M510 810.5H520M520.5 809V811M521 809.5H531M531.5 808V810M532 808.5H542M542.5 807V809M543 807.5H554M554.5 806V808M555 806.5H565M565.5 805V807M566 805.5H576M576.5 804V806M577 804.5H588M588.5 803V805M589 803.5H600M600.5 802V804M601 802.5H612M612.5 801V803M613 801.5H624M624.5 800V802M625 800.5H636M636.5 799V801M637 799.5H648M648.5 798V800M649 798.5H661M661.5 797V799M662 797.5H674M674.5 796V798M675 796.5H687M687.5 795V797M688 795.5H700M700.5 794V796M701 794.5H713M713.5 793V795M714 793.5H727M727.5 792V794M728 792.5H741M741.5 791V793M742 791.5H755M755.5 790V792M756 790.5H771M771.5 789V791M772 789.5H787M787.5 788V790M788 788.5H803M803.5 787V789M804 787.5H821M821.5 786V788M822 786.5H838M838.5 785V787M839 785.5H856M856.5 784V786M857 784.5H873M873.5 783V785M874 783.5H892M892.5 782V784M893 782.5H911M911.5 781V783M912 781.5H930M930.5 780V782M931 780.5H956M956.5 779V781M957 779.5H983M983.5 778V780M984 778.5H1012M1012.5 777V779M1013 777.5H1043M1043.5 776V778M1044 776.5H1079M1079.5 775V777M1080 775.5H1116M1116.5 774V776M1117 774.5H1154M1154.5 773V775M1155 773.5H1200M1200.5 772V774M1201 772.5H1251M1251.5 771V773M1252 771.5H1302M1302.5 770V772M1303 770.5H1373M1373.5 769V771M1374 769.5H1454M1454.5 769V771M1455 770.5H1499M1499.5 770V772M1500 771.5H1559M1559.5 771V773M1560 772.5H1614M1614.5 772V774M1615 773.5H1652M1652.5 773V775M1653 774.5H1691M1691.5 774V776M1692 775.5H1729M1729.5 775V777M1730 776.5H1751" fill="none" stroke="#ee8f1e" stroke-width="1" shape-rendering="crispEdges" />
<path d="M3 350.5H59M59.5 349V351M60 349.5H61M61.5 349V351M62.5 349V351M63.5 349V351M64 350.5H67M67.5 350V352M68.5 350V352M69 350.5H70M70.5 350V352M71 351.5H73M73.5 350V352M74 350.5H77M77.5 349V351M78 349.5H79M79.5 349V351M80 350.5H81M81.5 350V352M82.5 350V367M83.5 350V352M84.5 349V358M85 350.5H86M86.5 350V357M87 351.5H88M88.5 350V352M89.5 350V355M90 351.5H91M91.5 350V352M92 350.5H96M96.5 350V352M97 351.5H98M98.5 350V352M99 350.5H103M103.5 350V352M104.5 350V352M105 350.5H107M107.5 350V352M108 351.5H110M110.5 350V352M111 350.5H112M112.5 349V351M113.5 349V351M114.5 350V352M115 351.5H116M116.5 350V352M117 350.5H118M118.5 350V352M119 351.5H120M120.5 350V352M121 350.5H124M124.5 350V352M125.5 350V352M126 350.5H130M130.5 349V351M131 349.5H133M133.5 349V351M134.5 349V351M135.5 349V351M136 350.5H142M142.5 350V352M143 351.5H145M145.5 350V352M146 350.5H154M154.5 350V352M155 351.5H156M156.5 350V352M157 350.5H158M158.5 350V352M159 351.5H161M161.5 350V352M162.5 342V358M163 351.5H164M164.5 347V355M165 350.5H173M173.5 349V351M174 349.5H176M176.5 349V351M177 350.5H184M184.5 350V352M185 351.5H187M187.5 350V352M188 350.5H190M190.5 350V352M191.5 350V352M192 350.5H193M193.5 349V351M194 349.5H195M195.5 349V351M196 350.5H197M197.5 350V352M198 351.5H199M199.5 350V352M200 350.5H201M201.5 350V352M202 351.5H204M204.5 350V352M205 350.5H206M206.5 350V352M207 351.5H209M209.5 350V352M210 350.5H211M211.5 350V352M212.5 350V352M213 350.5H215M215.5 349V351M216 349.5H217M217.5 349V351M218 350.5H219M219.5 349V351M220 349.5H221M221.5 349V351M222 350.5H226M226.5 349V351M227 349.5H229M229.5 349V351M230 350.5H236M236.5 349V351M237 349.5H238M238.5 349V351M239 350.5H242M242.5 350V352M243 351.5H244M244.5 350V352M245 350.5H250M250.5 350V352M251.5 350V352M252 350.5H255M255.5 350V352M256 351.5H258M258.5 350V352M259.5 350V352M260 351.5H262M262.5 350V352M263 350.5H267M267.5 350V352M268 351.5H269M269.5 350V352M270 350.5H272M272.5 350V352M273.5 350V352M274 350.5H275M275.5 350V352M276.5 350V352M277.5 350V352M278 351.5H280M280.5 350V352M281 350.5H282M282.5 349V351M283 349.5H285M285.5 349V351M286.5 349V351M287 349.5H289M289.5 349V351M290 350.5H292M292.5 349V351M293 349.5H294M294.5 349V351M295 350.5H296M296.5 350V352M297.5 350V352M298 350.5H299M299.5 350V352M300.5 350V352M301 350.5H302M302.5 350V352M303 351.5H312M312.5 350V352M313 350.5H314M314.5 350V352M315 351.5H316M316.5 351V353M317 352.5H318M318.5 351V353M319 351.5H326M326.5 351V353M327 352.5H328M328.5 351V353M329 351.5H340M340.5 351V353M341 352.5H342M342.5 351V353M343 351.5H345M345.5 351V353M346 352.5H347M347.5 351V353M348.5 351V353M349 352.5H350M350.5 351V353M351 351.5H354M354.5 349V357M355 351.5H356M356.5 351V353M357.5 351V353M358 351.5H361M361.5 350V352M362 350.5H364M364.5 350V352M365 351.5H366M366.5 351V353M367 352.5H368M368.5 351V353M369.5 351V353M370.5 351V353M371 351.5H375M375.5 351V353M376 352.5H377M377.5 351V353M378.5 351V353M379 352.5H381M381.5 351V353M382 351.5H385M385.5 351V353M386.5 351V353M387 351.5H391M391.5 351V353M392 352.5H394M394.5 351V353M395 351.5H396M396.5 350V352M397 350.5H399M399.5 350V352M400 351.5H406M406.5 347V355M407 351.5H411M411.5 351V353M412.5 351V353M413.5 351V353M414.5 351V353M415 351.5H419M419.5 351V353M420 352.5H421M421.5 351V353M422.5 351V353M423 352.5H425M425.5 351V353M426 351.5H430M430.5 350V352M431 350.5H433M433.5 350V352M434 351.5H437M437.5 350V352M438 350.5H440M440.5 350V352M441 351.5H443M443.5 350V352M444.5 350V352M445 351.5H447M447.5 350V352M448 350.5H449M449.5 350V352M450 351.5H451M451.5 350V352M452 350.5H453M453.5 350V352M454 351.5H455M455.5 350V352M456 350.5H457M457.5 350V352M458.5 348V356M459 351.5H461M461.5 350V355M462 351.5H464M464.5 351V353M465 352.5H466M466.5 351V353M467 351.5H472M472.5 351V353M473 352.5H475M475.5 351V353M476.5 351V353M477.5 351V353M478 351.5H480M480.5 351V353M481 352.5H483M483.5 351V353M484 351.5H485M485.5 351V353M486 352.5H488M488.5 351V353M489.5 350V352M490 350.5H491M491.5 350V352M492 351.5H493M493.5 351V353M494.5 343V355M495 352.5H497M497.5 347V353M498.5 351V353M499 351.5H504M504.5 351V353M505 352.5H507M507.5 351V353M508 351.5H512M512.5 351V353M513 352.5H515M515.5 351V353M516 351.5H522M522.5 350V352M523 350.5H525M525.5 350V352M526 351.5H529M529.5 351V353M530 352.5H531M531.5 351V353M532.5 350V352M533.5 350V352M534 351.5H535M535.5 350V352M536 350.5H538M538.5 350V352M539 351.5H540M540.5 351V353M541 352.5H543M543.5 351V353M544 351.5H547M547.5 351V353M548 352.5H550M550.5 351V353M551 351.5H553M553.5 351V353M554 352.5H555M555.5 351V353M556.5 351V353M557 352.5H559M559.5 351V353M560.5 350V352M561 350.5H563M563.5 350V352M564 351.5H568M568.5 351V353M569 352.5H570M570.5 351V353M571 351.5H572M572.5 348V354M573 352.5H575M575.5 351V353M576.5 351V353M577.5 351V353M578 351.5H581M581.5 351V353M582.5 351V353M583 351.5H586M586.5 351V353M587.5 351V353M588.5 350V352M589 350.5H590M590.5 350V352M591 351.5H592M592.5 350V352M593.5 350V352M594 351.5H613M613.5 350V352M614 350.5H616M616.5 350V352M617 351.5H622M622.5 351V353M623.5 351V353M624 351.5H630M630.5 351V353M631 352.5H632M632.5 351V353M633 351.5H641M641.5 350V352M642.5 341V360M643 350.5H644M644.5 350V352M645.5 348V354M646 350.5H649M649.5 350V352M650 351.5H651M651.5 350V352M652 350.5H657M657.5 350V352M658 351.5H660M660.5 350V352M661 350.5H669M669.5 350V352M670 351.5H672M672.5 350V352M673.5 350V352M674.5 350V352M675 350.5H680M680.5 350V352M681 351.5H683M683.5 350V352M684 350.5H689M689.5 350V352M690 351.5H692M692.5 350V352M693 350.5H699M699.5 350V352M700.5 350V352M701 350.5H702M702.5 349V351M703 349.5H705M705.5 349V351M706 350.5H714M714.5 350V352M715.5 350V352M716.5 349V351M717.5 349V351M718 350.5H725M725.5 350V352M726.5 350V352M727 350.5H730M730.5 350V352M731 351.5H732M732.5 350V352M733 350.5H738M738.5 350V352M739 351.5H740M740.5 350V352M741 350.5H743M743.5 350V352M744 351.5H745M745.5 350V352M746 350.5H752M752.5 350V352M753 351.5H755M755.5 350V352M756.5 350V352M757 351.5H759M759.5 350V352M760 350.5H762M762.5 350V352M763.5 350V352M764 350.5H765M765.5 350V352M766 351.5H768M768.5 350V352M769 350.5H772M772.5 350V352M773.5 350V352M774 350.5H779M779.5 350V352M780 351.5H781M781.5 350V352M782.5 350V352M783 351.5H784M784.5 350V352M785.5 349V351M786 349.5H787M787.5 349V351M788.5 350V352M789.5 350V352M790.5 350V352M791.5 350V352M792 350.5H795M795.5 349V351M796 349.5H797M797.5 349V351M798 350.5H799M799.5 350V352M800 351.5H801M801.5 350V352M802 350.5H803M803.5 350V352M804 351.5H806M806.5 350V352M807.5 350V352M808 351.5H810M810.5 350V352M811.5 345V361M812 350.5H813M813.5 349V351M814 349.5H815M815.5 349V351M816.5 346V351M817.5 350V352M818 351.5H820M820.5 350V352M821 350.5H824M824.5 350V352M825.5 350V352M826.5 350V352M827 351.5H828M828.5 350V352M829 350.5H830M830.5 350V352M831 351.5H832M832.5 350V352M833.5 350V352M834 351.5H836M836.5 350V352M837.5 350V352M838 351.5H840M840.5 350V352M841 350.5H842M842.5 349V351M843 349.5H845M845.5 349V351M846 350.5H848M848.5 349V351M849 349.5H851M851.5 349V351M852 350.5H854M854.5 350V352M855 351.5H856M856.5 350V352M857 350.5H860M860.5 350V352M861 351.5H863M863.5 350V352M864 350.5H867M867.5 350V352M868 351.5H870M870.5 350V352M871 350.5H874M874.5 349V351M875.5 348V350M876 348.5H877M877.5 348V350M878 349.5H882M882.5 349V351M883 350.5H884M884.5 349V351M885 349.5H891M891.5 348V350M892.5 347V349M893.5 347V349M894 348.5H899M899.5 348V350M900 349.5H902M902.5 348V350M903 348.5H904M904.5 347V349M905 347.5H907M907.5 347V349M908 348.5H914M914.5 348V350M915 349.5H916M916.5 348V350M917.5 348V350M918 349.5H920M920.5 348V350M921 348.5H932M932.5 348V350M933.5 348V350M934 348.5H939M939.5 347V349M940.5 347V349M941 348.5H943M943.5 348V350M944 349.5H946M946.5 348V350M947.5 348V350M948.5 348V350M949 348.5H955M955.5 348V350M956.5 348V350M957 348.5H959M959.5 347V349M960 347.5H962M962.5 347V349M963 348.5H970M970.5 348V350M971 349.5H973M973.5 348V350M974.5 347V349M975.5 347V349M976 348.5H981M981.5 348V350M982.5 348V350M983 348.5H984M984.5 347V349M985.5 347V349M986 348.5H989M989.5 348V350M990 349.5H991M991.5 348V350M992.5 347V349M993 347.5H994M994.5 347V349M995 348.5H1002M1002.5 348V350M1003 349.5H1004M1004.5 348V350M1005 348.5H1012M1012.5 348V350M1013 349.5H1015M1015.5 348V350M1016.5 348V350M1017.5 348V350M1018 348.5H1020M1020.5 348V350M1021 349.5H1022M1022.5 348V350M1023.5 348V350M1024 349.5H1025M1025.5 348V350M1026 348.5H1029M1029.5 348V350M1030.5 348V350M1031 348.5H1033M1033.5 348V350M1034 349.5H1035M1035.5 348V350M1036 348.5H1037M1037.5 348V350M1038 349.5H1039M1039.5 348V350M1040.5 347V349M1041 347.5H1042M1042.5 347V349M1043 348.5H1045M1045.5 348V350M1046 349.5H1048M1048.5 348V350M1049 348.5H1051M1051.5 348V350M1052 349.5H1053M1053.5 348V350M1054 348.5H1056M1056.5 348V350M1057.5 349V351M1058 350.5H1062M1062.5 349V351M1063 349.5H1064M1064.5 349V351M1065.5 350V352M1066 351.5H1067M1067.5 350V352M1068 350.5H1070M1070.5 349V351M1071 349.5H1072M1072.5 349V351M1073.5 349V351M1074 349.5H1076M1076.5 349V351M1077 350.5H1078M1078.5 349V351M1079.5 349V351M1080 350.5H1092M1092.5 350V352M1093 351.5H1095M1095.5 350V352M1096 350.5H1100M1100.5 350V352M1101.5 350V352M1102.5 350V352M1103 351.5H1104M1104.5 350V352M1105.5 349V351M1106 349.5H1107M1107.5 349V351M1108 350.5H1112M1112.5 349V351M1113.5 349V351M1114 350.5H1117M1117.5 349V351M1118 349.5H1119M1119.5 349V351M1120.5 349V351M1121 349.5H1123M1123.5 349V351M1124 350.5H1125M1125.5 349V351M1126.5 349V351M1127 350.5H1132M1132.5 350V352M1133.5 350V352M1134 350.5H1138M1138.5 350V352M1139 351.5H1141M1141.5 350V352M1142.5 349V351M1143.5 349V351M1144.5 350V352M1145.5 350V352M1146 350.5H1147M1147.5 349V351M1148 349.5H1149M1149.5 349V351M1150 350.5H1151M1151.5 350V352M1152.5 350V352M1153 350.5H1158M1158.5 349V351M1159 349.5H1160M1160.5 349V351M1161 350.5H1168M1168.5 350V352M1169 351.5H1171M1171.5 350V352M1172.5 350V352M1173 351.5H1175M1175.5 350V352M1176 350.5H1178M1178.5 350V352M1179 351.5H1181M1181.5 350V352M1182 350.5H1190M1190.5 350V352M1191 351.5H1192M1192.5 350V352M1193 350.5H1195M1195.5 350V352M1196 351.5H1197M1197.5 350V352M1198 350.5H1202M1202.5 349V351M1203 349.5H1204M1204.5 349V351M1205 350.5H1207M1207.5 350V352M1208 351.5H1209M1209.5 350V352M1210 350.5H1211M1211.5 350V352M1212 351.5H1214M1214.5 350V352M1215 350.5H1219M1219.5 350V352M1220.5 350V352M1221 350.5H1222M1222.5 350V352M1223 351.5H1224M1224.5 350V352M1225 350.5H1232M1232.5 350V352M1233 351.5H1235M1235.5 350V352M1236 350.5H1238M1238.5 349V351M1239 349.5H1240M1240.5 349V351M1241.5 349V351M1242 349.5H1243M1243.5 349V351M1244 350.5H1245M1245.5 350V352M1246.5 350V352M1247 350.5H1249M1249.5 349V351M1250.5 349V351M1251 350.5H1258M1258.5 349V351M1259 349.5H1261M1261.5 349V351M1262.5 350V352M1263 351.5H1265M1265.5 350V352M1266 350.5H1267M1267.5 350V352M1268 351.5H1269M1269.5 350V352M1270 350.5H1273M1273.5 350V352M1274.5 350V352M1275 350.5H1277M1277.5 349V351M1278.5 349V351M1279 350.5H1280M1280.5 350V352M1281.5 351V353M1282.5 352V354M1283 353.5H1286M1286.5 353V356M1287.5 354V356M1288.5 354V356M1289 355.5H1290M1290.5 354V356M1291.5 353V355M1292.5 353V355M1293 354.5H1295M1295.5 353V355M1296.5 352V354M1297 352.5H1299M1299.5 352V354M1300 353.5H1302M1302.5 352V354M1303 352.5H1305M1305.5 351V353M1306 351.5H1308M1308.5 351V353M1309.5 351V353M1310 351.5H1312M1312.5 351V353M1313 352.5H1316M1316.5 351V353M1317 351.5H1322M1322.5 351V353M1323 352.5H1324M1324.5 351V353M1325 351.5H1328M1328.5 351V353M1329 352.5H1331M1331.5 351V353M1332 351.5H1335M1335.5 351V353M1336 352.5H1337M1337.5 351V353M1338.5 351V353M1339.5 351V353M1340.5 350V352M1341 350.5H1345M1345.5 349V351M1346 349.5H1347M1347.5 349V351M1348 350.5H1349M1349.5 350V352M1350 351.5H1352M1352.5 350V352M1353 350.5H1357M1357.5 350V352M1358 351.5H1360M1360.5 350V352M1361.5 350V352M1362 351.5H1364M1364.5 350V352M1365 350.5H1367M1367.5 349V351M1368 349.5H1371M1371.5 349V351M1372 350.5H1374M1374.5 349V351M1375 349.5H1377M1377.5 349V351M1378 350.5H1380M1380.5 349V351M1381.5 349V351M1382 350.5H1383M1383.5 349V351M1384.5 349V351M1385 350.5H1386M1386.5 349V351M1387.5 347V350M1388 347.5H1390M1390.5 347V349M1391 348.5H1393M1393.5 347V349M1394 347.5H1395M1395.5 347V349M1396 348.5H1397M1397.5 347V349M1398 347.5H1407M1407.5 346V348M1408.5 346V348M1409.5 345V348M1410 345.5H1412M1412.5 345V347M1413.5 345V347M1414.5 343V346M1415.5 341V344M1416.5 336V342M1417.5 311V337M1418.5 290V312M1419 290.5H1420M1420.5 290V311M1421 290.5H1427M1427.5 290V295M1428.5 294V305M1429.5 304V308M1430.5 307V312M1431.5 311V318M1432.5 317V320M1433.5 319V325M1434.5 324V330M1435.5 329V334M1436.5 333V336M1437 335.5H1438M1438.5 335V339M1439.5 337V340M1440.5 339V341M1441.5 340V342M1442.5 341V343M1443.5 342V344M1444 343.5H1445M1445.5 343V345M1446.5 344V346M1447.5 345V347M1448.5 345V347M1449 345.5H1450M1450.5 345V348M1451 347.5H1453M1453.5 347V349M1454 348.5H1458M1458.5 348V350M1459 349.5H1751" fill="none" stroke="#e0203e" stroke-width="1" shape-rendering="crispEdges" />
<path d="M56 297.5L57 299L57.9 312L59.4 334L60.6 348L61.3 351L60.5 357L59.2 368L58.7 379L58 390L57.3 398L56 401.5Z" fill="#e0203e" shape-rendering="crispEdges"/>
<path d="M82 350L82.3 366.5L84 360L86 356L88.5 352.5V350Z" fill="#e0203e" shape-rendering="crispEdges"/>
<line x1="3" y1="161.5" x2="1722" y2="161.5" stroke="#3a3a3a" stroke-width="1" stroke-dasharray="5.5 4.5" shape-rendering="crispEdges"/>
<line x1="3" y1="246.5" x2="1740" y2="246.5" stroke="#3a3a3a" stroke-width="1" stroke-dasharray="5.5 4.5" shape-rendering="crispEdges"/>
<line x1="3" y1="349.5" x2="1722" y2="349.5" stroke="#3a3a3a" stroke-width="1" stroke-dasharray="5.5 4.5" shape-rendering="crispEdges"/>
<line x1="3" y1="478.5" x2="1740" y2="478.5" stroke="#3a3a3a" stroke-width="1" stroke-dasharray="5.5 4.5" shape-rendering="crispEdges"/>
<line x1="3" y1="583.5" x2="1722" y2="583.5" stroke="#3a3a3a" stroke-width="1" stroke-dasharray="5.5 4.5" shape-rendering="crispEdges"/>
<line x1="3" y1="863.5" x2="1722" y2="863.5" stroke="#3a3a3a" stroke-width="1" stroke-dasharray="5.5 4.5" shape-rendering="crispEdges"/>
<line x1="3" y1="978.5" x2="1722" y2="978.5" stroke="#3a3a3a" stroke-width="1" stroke-dasharray="5.5 4.5" shape-rendering="crispEdges"/>
<path d="M42 978.5H191M191.5 977V979M192 977.5H197M197.5 976V978M198 976.5H202M202.5 975V977M203 975.5H207M207.5 974V976M208 974.5H212M212.5 973V975M213 973.5H217M217.5 972V974M218 972.5H222M222.5 971V973M223 971.5H227M227.5 970V972M228 970.5H232M232.5 969V971M233 969.5H237M237.5 968V970M238 968.5H243M243.5 967V969M244 967.5H248M248.5 966V968M249 966.5H254M254.5 965V967M255 965.5H260M260.5 964V966M261 964.5H265M265.5 963V965M266 963.5H271M271.5 962V964M272 962.5H277M277.5 961V963M278 961.5H282M282.5 960V962M283 960.5H288M288.5 959V961M289 959.5H294M294.5 958V960M295 958.5H300M300.5 957V959M301.5 956V958M302.5 956V958M303 957.5H305M305.5 956V958M306.5 955V957M307 955.5H308M308.5 955V957M309.5 956V958M310 957.5H311M311.5 956V958M312.5 955V957M313 955.5H316M316.5 954V956M317.5 954V956M318.5 954V956M319 954.5H321M321.5 953V955M322.5 953V955M323 954.5H324M324.5 953V955M325 953.5H330M330.5 952V954M331.5 951V953M332.5 951V953M333.5 951V953M334 951.5H335M335.5 951V953M336 952.5H337M337.5 951V953M338 951.5H344M344.5 950V952M345 950.5H351M351.5 949V951M352.5 948V950M353.5 948V952M354.5 951V954M355.5 951V954M356.5 949V952M357.5 948V950M358 948.5H363M363.5 947V949M364 947.5H370M370.5 946V948M371 946.5H377M377.5 945V947M378 945.5H386M386.5 944V946M387.5 943V945M388 943.5H389M389.5 943V945M390 944.5H392M392.5 943V945M393 943.5H399M399.5 942V944M400 942.5H405M405.5 942V944M406.5 943V947M407.5 944V947M408.5 941V945M409 941.5H416M416.5 940V942M417 940.5H425M425.5 939V941M426 939.5H428M428.5 938V940M429 938.5H431M431.5 938V940M432 939.5H435M435.5 938V940M436 938.5H438M438.5 937V939M439.5 937V939M440 938.5H445M445.5 937V939M446 937.5H448M448.5 936V938M449 936.5H450M450.5 936V938M451 937.5H456M456.5 937V939M457.5 938V940M458.5 937V940M459.5 936V938M460.5 936V938M461 937.5H462M462.5 936V938M463 936.5H467M467.5 935V937M468 935.5H471M471.5 935V937M472 936.5H473M473.5 935V937M474 935.5H480M480.5 934V936M481 934.5H488M488.5 933V935M489 933.5H491M491.5 933V935M492 934.5H493M493.5 934V937M494.5 936V939M495.5 937V939M496.5 936V938M497 936.5H498M498.5 935V937M499 935.5H505M505.5 934V936M506 934.5H513M513.5 932V935M514 932.5H516M516.5 932V934M517.5 932V934M518 932.5H519M519.5 932V934M520 933.5H526M526.5 932V934M527 932.5H533M533.5 931V933M534.5 931V933M535.5 932V934M536.5 932V934M537.5 932V934M538.5 932V934M539.5 931V933M540 931.5H552M552.5 930V932M553 930.5H566M566.5 929V931M567 929.5H571M571.5 929V932M572.5 931V933M573.5 931V933M574.5 929V932M575 929.5H576M576.5 929V931M577 930.5H579M579.5 929V931M580 929.5H582M582.5 928V930M583 928.5H584M584.5 927V929M585 927.5H586M586.5 927V929M587 928.5H589M589.5 928V930M590 929.5H591M591.5 928V930M592 928.5H593M593.5 927V929M594 927.5H595M595.5 927V929M596 928.5H597M597.5 927V929M598.5 927V929M599 928.5H601M601.5 927V929M602 927.5H607M607.5 926V928M608.5 926V928M609 927.5H613M613.5 926V928M614 926.5H616M616.5 925V927M617.5 925V927M618 926.5H624M624.5 926V928M625.5 926V928M626 926.5H630M630.5 925V927M631 925.5H641M641.5 925V928M642.5 927V929M643.5 927V929M644.5 926V928M645 926.5H648M648.5 925V927M649.5 924V926M650 924.5H651M651.5 924V926M652 925.5H654M654.5 924V926M655 924.5H662M662.5 923V925M663 923.5H672M672.5 922V924M673 922.5H675M675.5 922V924M676 923.5H677M677.5 922V924M678 922.5H683M683.5 921V923M684 921.5H686M686.5 920V922M687.5 920V922M688 921.5H694M694.5 920V922M695 920.5H706M706.5 919V921M707 919.5H720M720.5 918V920M721 918.5H722M722.5 918V920M723 919.5H724M724.5 918V920M725.5 917V919M726 917.5H728M728.5 917V919M729 918.5H733M733.5 917V919M734.5 917V919M735 918.5H736M736.5 917V919M737 917.5H747M747.5 916V918M748 916.5H757M757.5 914V917M758.5 914V916M759.5 914V916M760 914.5H761M761.5 913V915M762 913.5H768M768.5 913V915M769 914.5H771M771.5 913V915M772 913.5H774M774.5 912V914M775 912.5H792M792.5 912V914M793.5 912V914M794 912.5H801M801.5 911V913M802 911.5H803M803.5 911V913M804 912.5H809M809.5 909V913M810.5 907V912M811.5 911V917M812.5 915V917M813.5 914V916M814 914.5H815M815.5 914V916M816 915.5H817M817.5 915V917M818 916.5H820M820.5 915V917M821 915.5H824M824.5 915V917M825 916.5H826M826.5 915V917M827 915.5H828M828.5 914V916M829 914.5H838M838.5 913V915M839 913.5H840M840.5 912V914M841 912.5H843M843.5 912V914M844 913.5H850M850.5 913V915M851 914.5H852M852.5 913V915M853 913.5H856M856.5 912V914M857 912.5H860M860.5 911V913M861.5 911V913M862 912.5H876M876.5 911V913M877 911.5H882M882.5 910V912M883 910.5H885M885.5 910V912M886 911.5H896M896.5 910V912M897.5 910V912M898 911.5H902M902.5 910V912M903 910.5H904M904.5 910V912M905.5 910V912M906 910.5H912M912.5 910V912M913 911.5H915M915.5 910V912M916 910.5H920M920.5 910V912M921 911.5H923M923.5 910V912M924.5 909V911M925 909.5H926M926.5 909V911M927 910.5H938M938.5 910V912M939 911.5H947M947.5 911V913M948 912.5H949M949.5 911V913M950 911.5H952M952.5 911V913M953 912.5H957M957.5 911V913M958 911.5H964M964.5 910V912M965.5 910V913M966 912.5H969M969.5 912V914M970.5 912V914M971.5 912V914M972 913.5H973M973.5 913V915M974 914.5H976M976.5 913V915M977 913.5H984M984.5 913V915M985 914.5H987M987.5 913V915M988.5 913V915M989 914.5H991M991.5 914V916M992 915.5H994M994.5 914V916M995 914.5H1001M1001.5 914V916M1002.5 915V917M1003 916.5H1004M1004.5 915V917M1005 915.5H1015M1015.5 915V917M1016 916.5H1021M1021.5 915V917M1022 915.5H1023M1023.5 915V917M1024 916.5H1027M1027.5 915V917M1028 915.5H1029M1029.5 915V917M1030.5 916V918M1031 917.5H1038M1038.5 917V919M1039 918.5H1040M1040.5 917V919M1041 917.5H1042M1042.5 917V919M1043 918.5H1052M1052.5 917V919M1053.5 917V919M1054.5 918V920M1055 919.5H1061M1061.5 919V921M1062 920.5H1087M1087.5 920V922M1088 921.5H1090M1090.5 920V922M1091.5 919V921M1092 919.5H1093M1093.5 919V921M1094 920.5H1097M1097.5 919V921M1098 919.5H1110M1110.5 917V920M1111.5 917V919M1112 918.5H1120M1120.5 917V919M1121 917.5H1122M1122.5 917V919M1123 918.5H1124M1124.5 917V919M1125 917.5H1130M1130.5 916V918M1131.5 916V918M1132 917.5H1139M1139.5 916V918M1140 916.5H1155M1155.5 915V917M1156.5 915V917M1157.5 915V917M1158.5 914V916M1159 914.5H1160M1160.5 914V916M1161 915.5H1171M1171.5 915V917M1172.5 915V917M1173 915.5H1177M1177.5 915V917M1178 916.5H1179M1179.5 915V917M1180.5 914V916M1181 914.5H1182M1182.5 914V916M1183 915.5H1184M1184.5 914V916M1185 914.5H1192M1192.5 913V915M1193 913.5H1194M1194.5 913V915M1195 914.5H1204M1204.5 914V916M1205.5 914V916M1206 914.5H1210M1210.5 914V916M1211.5 914V916M1212 914.5H1217M1217.5 913V915M1218 913.5H1222M1222.5 913V915M1223.5 913V915M1224 913.5H1227M1227.5 913V915M1228 914.5H1230M1230.5 913V915M1231 913.5H1239M1239.5 912V914M1240 912.5H1241M1241.5 912V914M1242 913.5H1250M1250.5 913V915M1251 914.5H1253M1253.5 913V915M1254 913.5H1256M1256.5 913V915M1257 914.5H1259M1259.5 913V915M1260 913.5H1262M1262.5 913V915M1263 914.5H1264M1264.5 913V915M1265 913.5H1266M1266.5 913V915M1267 914.5H1268M1268.5 913V915M1269 913.5H1281M1281.5 913V915M1282 914.5H1283M1283.5 914V916M1284 915.5H1286M1286.5 914V916M1287 914.5H1288M1288.5 912V915M1289 912.5H1291M1291.5 912V914M1292 913.5H1295M1295.5 912V914M1296 912.5H1302M1302.5 911V913M1303 911.5H1307M1307.5 910V912M1308 910.5H1310M1310.5 910V912M1311 911.5H1313M1313.5 910V912M1314 910.5H1323M1323.5 910V912M1324 911.5H1325M1325.5 909V912M1326 909.5H1337M1337.5 908V910M1338 908.5H1340M1340.5 907V909M1341 907.5H1342M1342.5 907V909M1343 908.5H1348M1348.5 908V910M1349.5 908V910M1350.5 907V909M1351 907.5H1354M1354.5 906V908M1355 906.5H1356M1356.5 906V908M1357 907.5H1360M1360.5 906V908M1361 906.5H1363M1363.5 906V908M1364.5 906V908M1365 906.5H1379M1379.5 905V907M1380.5 905V907M1381 906.5H1383M1383.5 905V907M1384 905.5H1404M1404.5 905V907M1405 906.5H1411M1411.5 906V908M1412 907.5H1414M1414.5 907V909M1415 908.5H1416M1416.5 908V911M1417.5 910V912M1418.5 911V961M1419.5 958V960M1420.5 957V959M1421 957.5H1422M1422.5 956V958M1423 956.5H1424M1424.5 956V958M1425 957.5H1426M1426.5 957V959M1427 958.5H1428M1428.5 958V960M1429.5 959V961M1430 960.5H1431M1431.5 960V962M1432.5 961V963M1433 962.5H1434M1434.5 962V964M1435 963.5H1437M1437.5 963V965M1438 964.5H1441M1441.5 964V966M1442 965.5H1457M1457.5 965V967M1458 966.5H1751" fill="none" stroke="#6c2c8e" stroke-width="1" shape-rendering="crispEdges" />
<path d="M9 851.0H30L42 863.5L30 876.0H9Q6 876.0 6 873.0V854.0Q6 851.0 9 851.0Z" fill="#fdf0e3" stroke="#f09a3c" stroke-width="1.3" stroke-linejoin="round"/>
<text x="22.5" y="866.8" text-anchor="middle" class="bt" fill="#111">M 1</text>
<path d="M9 965.8H30L42 978.3L30 990.8H9Q6 990.8 6 987.8V968.8Q6 965.8 9 965.8Z" fill="#f1e7f5" stroke="#8a3cae" stroke-width="1.3" stroke-linejoin="round"/>
<text x="22.5" y="981.5999999999999" text-anchor="middle" class="bt" fill="#7a2a9c">M 2</text>
<rect x="3" y="173" width="1748" height="2" fill="#555"/>
<rect x="3" y="290" width="1748" height="2" fill="#555"/>
<rect x="3" y="407" width="1748" height="2" fill="#555"/>
<rect x="3" y="524" width="1748" height="2" fill="#555"/>
<rect x="3" y="641" width="1748" height="2" fill="#555"/>
<rect x="3" y="758" width="1748" height="2" fill="#555"/>
<rect x="3" y="875" width="1748" height="2" fill="#555"/>
<path d="M9 102.6H78L84 115.6L78 128.6H9Q6 128.6 6 125.6V105.6Q6 102.6 9 102.6Z" fill="#e6e6e6" stroke="#111" stroke-width="1.6" stroke-linejoin="round"/>
<line x1="33" y1="102.6" x2="33" y2="128.6" stroke="#111" stroke-width="1.6"/>
<text x="19.5" y="119.39999999999999" text-anchor="middle" class="bt" fill="#111">C 1</text>
<text x="57" y="119.39999999999999" text-anchor="middle" class="bt" fill="#111">20 V</text>
<path d="M9 219.5H78L84 232.5L78 245.5H9Q6 245.5 6 242.5V222.5Q6 219.5 9 219.5Z" fill="#e6f7f8" stroke="#22c4cc" stroke-width="1.8" stroke-linejoin="round"/>
<line x1="33" y1="219.5" x2="33" y2="245.5" stroke="#22c4cc" stroke-width="1.8"/>
<text x="19.5" y="236.3" text-anchor="middle" class="bt" fill="#111">C 2</text>
<text x="57" y="236.3" text-anchor="middle" class="bt" fill="#111">300 mV</text>
<path d="M9 337.5H30L42 350L30 362.5H9Q6 362.5 6 359.5V340.5Q6 337.5 9 337.5Z" fill="#fde6ea" stroke="#f0607a" stroke-width="1.3" stroke-linejoin="round"/>
<text x="22.5" y="353.3" text-anchor="middle" class="bt" fill="#f0607a">C 3</text>
<path d="M9 453.5H78L84 466.5L78 479.5H9Q6 479.5 6 476.5V456.5Q6 453.5 9 453.5Z" fill="#eef7e2" stroke="#82c832" stroke-width="1.8" stroke-linejoin="round"/>
<line x1="33" y1="453.5" x2="33" y2="479.5" stroke="#82c832" stroke-width="1.8"/>
<text x="19.5" y="470.3" text-anchor="middle" class="bt" fill="#111">C 4</text>
<text x="57" y="470.3" text-anchor="middle" class="bt" fill="#111">200 mV</text>
<path d="M9 571.3H30L42 583.8L30 596.3H9Q6 596.3 6 593.3V574.3Q6 571.3 9 571.3Z" fill="#fdf0e3" stroke="#ff9a32" stroke-width="1.3" stroke-linejoin="round"/>
<text x="22.5" y="587.0999999999999" text-anchor="middle" class="bt" fill="#111">C 5</text>
<path d="M9 687.5H78L84 700.5L78 713.5H9Q6 713.5 6 710.5V690.5Q6 687.5 9 687.5Z" fill="#e6e6f6" stroke="#111" stroke-width="1.6" stroke-linejoin="round"/>
<path d="M9 687.5H33V713.5H9Q6 713.5 6 710.5V690.5Q6 687.5 9 687.5Z" fill="#2a25c4" stroke="#111" stroke-width="1.6"/>
<line x1="33" y1="687.5" x2="33" y2="713.5" stroke="#111" stroke-width="1.6"/>
<text x="19.5" y="704.3" text-anchor="middle" class="bt" fill="#fff">C 6</text>
<text x="57" y="704.3" text-anchor="middle" class="bt" fill="#2a2ac0">3 V</text>
<text x="101.6" y="122.4" class="nm" fill="#000" fill-opacity="0.55" textLength="99.2" lengthAdjust="spacingAndGlyphs">U_loop,coil</text>
<text x="100.6" y="121.4" class="nm" fill="#1c1c1c" textLength="99.2" lengthAdjust="spacingAndGlyphs">U_loop,coil</text>
<text x="101.6" y="239.6" class="nm" fill="#000" fill-opacity="0.55" textLength="77.7" lengthAdjust="spacingAndGlyphs">U_Bt,coil</text>
<text x="100.6" y="238.6" class="nm" fill="#1fbcc6" textLength="77.7" lengthAdjust="spacingAndGlyphs">U_Bt,coil</text>
<text x="53.9" y="356.1" class="nm" fill="#000" fill-opacity="0.55" textLength="93.7" lengthAdjust="spacingAndGlyphs">U_Rog,coil</text>
<text x="52.9" y="355.1" class="nm" fill="#e0244a" textLength="93.7" lengthAdjust="spacingAndGlyphs">U_Rog,coil</text>
<text x="101.6" y="473.6" class="nm" fill="#000" fill-opacity="0.55" textLength="87.7" lengthAdjust="spacingAndGlyphs">U_Photod</text>
<text x="100.6" y="472.6" class="nm" fill="#7dc024" textLength="87.7" lengthAdjust="spacingAndGlyphs">U_Photod</text>
<text x="53.9" y="590.4" class="nm" fill="#000" fill-opacity="0.55" textLength="103.7" lengthAdjust="spacingAndGlyphs">U_Diamagn</text>
<text x="52.9" y="589.4" class="nm" fill="#ff9a2e" textLength="103.7" lengthAdjust="spacingAndGlyphs">U_Diamagn</text>
<text x="100.6" y="707.5" class="nm" fill="#000" fill-opacity="0.55" textLength="65.0" lengthAdjust="spacingAndGlyphs">Trigger</text>
<text x="99.6" y="706.5" class="nm" fill="#2a2acc" textLength="65.0" lengthAdjust="spacingAndGlyphs">Trigger</text>
<text x="53.9" y="866.4" class="nm" fill="#000" fill-opacity="0.55" textLength="28.9" lengthAdjust="spacingAndGlyphs">B_t</text>
<text x="52.9" y="865.4" class="nm" fill="#f2901e" textLength="28.9" lengthAdjust="spacingAndGlyphs">B_t</text>
<text x="54.6" y="981.5" class="nm" fill="#000" fill-opacity="0.55" textLength="25.2" lengthAdjust="spacingAndGlyphs">I_p</text>
<text x="53.6" y="980.5" class="nm" fill="#6a2c90" textLength="25.2" lengthAdjust="spacingAndGlyphs">I_p</text>
<text x="1747.1" y="98.4" text-anchor="end" fill="#000" fill-opacity="0.85" class="yl">30 V</text>
<text x="1746.3" y="97.6" text-anchor="end" fill="#1c1c1c" class="yl">30 V</text>
<text x="1747.1" y="121.4" text-anchor="end" fill="#000" fill-opacity="0.85" class="yl">20 V</text>
<text x="1746.3" y="120.6" text-anchor="end" fill="#1c1c1c" class="yl">20 V</text>
<text x="1747.1" y="144.4" text-anchor="end" fill="#000" fill-opacity="0.85" class="yl">10 V</text>
<text x="1746.3" y="143.6" text-anchor="end" fill="#1c1c1c" class="yl">10 V</text>
<text x="1747.1" y="167.4" text-anchor="end" fill="#000" fill-opacity="0.85" class="yl">0 V</text>
<text x="1746.3" y="166.6" text-anchor="end" fill="#1c1c1c" class="yl">0 V</text>
<text x="1747.1" y="195.4" text-anchor="end" fill="#000" fill-opacity="0.85" class="yl">1.25 V</text>
<text x="1746.3" y="194.6" text-anchor="end" fill="#1fbcc6" class="yl">1.25 V</text>
<text x="1747.1" y="218.4" text-anchor="end" fill="#000" fill-opacity="0.85" class="yl">750 mV</text>
<text x="1746.3" y="217.6" text-anchor="end" fill="#1fbcc6" class="yl">750 mV</text>
<text x="1747.1" y="241.4" text-anchor="end" fill="#000" fill-opacity="0.85" class="yl">250 mV</text>
<text x="1746.3" y="240.6" text-anchor="end" fill="#1fbcc6" class="yl">250 mV</text>
<text x="1747.1" y="264.4" text-anchor="end" fill="#000" fill-opacity="0.85" class="yl">-250 mV</text>
<text x="1746.3" y="263.6" text-anchor="end" fill="#1fbcc6" class="yl">-250 mV</text>
<text x="1747.1" y="287.4" text-anchor="end" fill="#000" fill-opacity="0.85" class="yl">-750 mV</text>
<text x="1746.3" y="286.6" text-anchor="end" fill="#1fbcc6" class="yl">-750 mV</text>
<text x="1747.1" y="309.4" text-anchor="end" fill="#000" fill-opacity="0.85" class="yl">1.80 V</text>
<text x="1746.3" y="308.6" text-anchor="end" fill="#e0244a" class="yl">1.80 V</text>
<text x="1747.1" y="332.4" text-anchor="end" fill="#000" fill-opacity="0.85" class="yl">900 mV</text>
<text x="1746.3" y="331.6" text-anchor="end" fill="#e0244a" class="yl">900 mV</text>
<text x="1747.1" y="355.4" text-anchor="end" fill="#000" fill-opacity="0.85" class="yl">0 V</text>
<text x="1746.3" y="354.6" text-anchor="end" fill="#e0244a" class="yl">0 V</text>
<text x="1747.1" y="378.4" text-anchor="end" fill="#000" fill-opacity="0.85" class="yl">-900 mV</text>
<text x="1746.3" y="377.6" text-anchor="end" fill="#e0244a" class="yl">-900 mV</text>
<text x="1747.1" y="401.4" text-anchor="end" fill="#000" fill-opacity="0.85" class="yl">-1.80 V</text>
<text x="1746.3" y="400.6" text-anchor="end" fill="#e0244a" class="yl">-1.80 V</text>
<text x="1747.1" y="426.4" text-anchor="end" fill="#000" fill-opacity="0.85" class="yl">1 V</text>
<text x="1746.3" y="425.6" text-anchor="end" fill="#7dc024" class="yl">1 V</text>
<text x="1747.1" y="449.4" text-anchor="end" fill="#000" fill-opacity="0.85" class="yl">600 mV</text>
<text x="1746.3" y="448.6" text-anchor="end" fill="#7dc024" class="yl">600 mV</text>
<text x="1747.1" y="472.4" text-anchor="end" fill="#000" fill-opacity="0.85" class="yl">200 mV</text>
<text x="1746.3" y="471.6" text-anchor="end" fill="#7dc024" class="yl">200 mV</text>
<text x="1747.1" y="495.4" text-anchor="end" fill="#000" fill-opacity="0.85" class="yl">-200 mV</text>
<text x="1746.3" y="494.6" text-anchor="end" fill="#7dc024" class="yl">-200 mV</text>
<text x="1747.1" y="518.4" text-anchor="end" fill="#000" fill-opacity="0.85" class="yl">-600 mV</text>
<text x="1746.3" y="517.6" text-anchor="end" fill="#7dc024" class="yl">-600 mV</text>
<text x="1747.1" y="543.4" text-anchor="end" fill="#000" fill-opacity="0.85" class="yl">4 V</text>
<text x="1746.3" y="542.6" text-anchor="end" fill="#ff9a2e" class="yl">4 V</text>
<text x="1747.1" y="566.4" text-anchor="end" fill="#000" fill-opacity="0.85" class="yl">2 V</text>
<text x="1746.3" y="565.6" text-anchor="end" fill="#ff9a2e" class="yl">2 V</text>
<text x="1747.1" y="589.4" text-anchor="end" fill="#000" fill-opacity="0.85" class="yl">0 V</text>
<text x="1746.3" y="588.6" text-anchor="end" fill="#ff9a2e" class="yl">0 V</text>
<text x="1747.1" y="612.4" text-anchor="end" fill="#000" fill-opacity="0.85" class="yl">-2 V</text>
<text x="1746.3" y="611.6" text-anchor="end" fill="#ff9a2e" class="yl">-2 V</text>
<text x="1747.1" y="635.4" text-anchor="end" fill="#000" fill-opacity="0.85" class="yl">-4 V</text>
<text x="1746.3" y="634.6" text-anchor="end" fill="#ff9a2e" class="yl">-4 V</text>
<text x="1747.1" y="660.4" text-anchor="end" fill="#000" fill-opacity="0.85" class="yl">6 V</text>
<text x="1746.3" y="659.6" text-anchor="end" fill="#2a2acc" class="yl">6 V</text>
<text x="1747.1" y="683.4" text-anchor="end" fill="#000" fill-opacity="0.85" class="yl">4.50 V</text>
<text x="1746.3" y="682.6" text-anchor="end" fill="#2a2acc" class="yl">4.50 V</text>
<text x="1747.1" y="706.4" text-anchor="end" fill="#000" fill-opacity="0.85" class="yl">3 V</text>
<text x="1746.3" y="705.6" text-anchor="end" fill="#2a2acc" class="yl">3 V</text>
<text x="1747.1" y="729.4" text-anchor="end" fill="#000" fill-opacity="0.85" class="yl">1.50 V</text>
<text x="1746.3" y="728.6" text-anchor="end" fill="#2a2acc" class="yl">1.50 V</text>
<text x="1747.1" y="752.4" text-anchor="end" fill="#000" fill-opacity="0.85" class="yl">0 V</text>
<text x="1746.3" y="751.6" text-anchor="end" fill="#2a2acc" class="yl">0 V</text>
<text x="1747.1" y="777.4" text-anchor="end" fill="#000" fill-opacity="0.85" class="yl">593.042 mT</text>
<text x="1746.3" y="776.6" text-anchor="end" fill="#f2901e" class="yl">593.042 mT</text>
<text x="1747.1" y="800.4" text-anchor="end" fill="#000" fill-opacity="0.85" class="yl">444.781 mT</text>
<text x="1746.3" y="799.6" text-anchor="end" fill="#f2901e" class="yl">444.781 mT</text>
<text x="1747.1" y="823.4" text-anchor="end" fill="#000" fill-opacity="0.85" class="yl">296.521 mT</text>
<text x="1746.3" y="822.6" text-anchor="end" fill="#f2901e" class="yl">296.521 mT</text>
<text x="1747.1" y="846.4" text-anchor="end" fill="#000" fill-opacity="0.85" class="yl">148.260 mT</text>
<text x="1746.3" y="845.6" text-anchor="end" fill="#f2901e" class="yl">148.260 mT</text>
<text x="1747.1" y="869.4" text-anchor="end" fill="#000" fill-opacity="0.85" class="yl">0 T</text>
<text x="1746.3" y="868.6" text-anchor="end" fill="#f2901e" class="yl">0 T</text>
<text x="1747.1" y="891.4" text-anchor="end" fill="#000" fill-opacity="0.85" class="yl">6.047309 kA</text>
<text x="1746.3" y="890.6" text-anchor="end" fill="#6a2c90" class="yl">6.047309 kA</text>
<text x="1747.1" y="915.4" text-anchor="end" fill="#000" fill-opacity="0.85" class="yl">4.535482 kA</text>
<text x="1746.3" y="914.6" text-anchor="end" fill="#6a2c90" class="yl">4.535482 kA</text>
<text x="1747.1" y="938.4" text-anchor="end" fill="#000" fill-opacity="0.85" class="yl">3.023654 kA</text>
<text x="1746.3" y="937.6" text-anchor="end" fill="#6a2c90" class="yl">3.023654 kA</text>
<text x="1747.1" y="961.4" text-anchor="end" fill="#000" fill-opacity="0.85" class="yl">1.511827 kA</text>
<text x="1746.3" y="960.6" text-anchor="end" fill="#6a2c90" class="yl">1.511827 kA</text>
<text x="1747.1" y="984.4" text-anchor="end" fill="#000" fill-opacity="0.85" class="yl">0 A</text>
<text x="1746.3" y="983.6" text-anchor="end" fill="#6a2c90" class="yl">0 A</text>
<text x="56.3" y="753.4" text-anchor="middle" fill="#000" fill-opacity="0.85" class="yl">0 s</text>
<text x="55.5" y="752.6" text-anchor="middle" fill="#2a2a2a" class="yl">0 s</text>
<text x="231.3" y="753.4" text-anchor="middle" fill="#000" fill-opacity="0.85" class="yl">4 ms</text>
<text x="230.5" y="752.6" text-anchor="middle" fill="#2a2a2a" class="yl">4 ms</text>
<text x="406.3" y="753.4" text-anchor="middle" fill="#000" fill-opacity="0.85" class="yl">8 ms</text>
<text x="405.5" y="752.6" text-anchor="middle" fill="#2a2a2a" class="yl">8 ms</text>
<text x="581.3" y="753.4" text-anchor="middle" fill="#000" fill-opacity="0.85" class="yl">12 ms</text>
<text x="580.5" y="752.6" text-anchor="middle" fill="#2a2a2a" class="yl">12 ms</text>
<text x="756.3" y="753.4" text-anchor="middle" fill="#000" fill-opacity="0.85" class="yl">16 ms</text>
<text x="755.5" y="752.6" text-anchor="middle" fill="#2a2a2a" class="yl">16 ms</text>
<text x="930.3" y="753.4" text-anchor="middle" fill="#000" fill-opacity="0.85" class="yl">20 ms</text>
<text x="929.5" y="752.6" text-anchor="middle" fill="#2a2a2a" class="yl">20 ms</text>
<text x="1105.3" y="753.4" text-anchor="middle" fill="#000" fill-opacity="0.85" class="yl">24 ms</text>
<text x="1104.5" y="752.6" text-anchor="middle" fill="#2a2a2a" class="yl">24 ms</text>
<text x="1280.3" y="753.4" text-anchor="middle" fill="#000" fill-opacity="0.85" class="yl">28 ms</text>
<text x="1279.5" y="752.6" text-anchor="middle" fill="#2a2a2a" class="yl">28 ms</text>
<text x="1455.3" y="753.4" text-anchor="middle" fill="#000" fill-opacity="0.85" class="yl">32 ms</text>
<text x="1454.5" y="752.6" text-anchor="middle" fill="#2a2a2a" class="yl">32 ms</text>
<text x="1630.3" y="753.4" text-anchor="middle" fill="#000" fill-opacity="0.85" class="yl">36 ms</text>
<text x="1629.5" y="752.6" text-anchor="middle" fill="#2a2a2a" class="yl">36 ms</text>
<path d="M45 58H66L55.5 68.5Z" fill="#ff9326"/>
<path d="M1711 64.5H1743Q1746 64.5 1746 67.5V97.5Q1745.5 99.5 1743.5 98Z" fill="#4b4b4b" stroke="#1e1e1e" stroke-width="1.3" stroke-linejoin="round"/>
<circle cx="1737" cy="72.3" r="3.9" fill="none" stroke="#a9a9a9" stroke-width="1.6"/>
<line x1="1734" y1="75.5" x2="1728" y2="80.6" stroke="#a9a9a9" stroke-width="2.2" stroke-linecap="round"/>
<path d="M45 643H65V664H60L55.3 671L50.5 664H45Z" fill="#ff8c1a"/>
<path d="M47 645.5H63V662H58L55.3 665.5L52.5 662H47Z" fill="#000"/>
<text x="55.2" y="659.5" text-anchor="middle" font-size="14.5" font-weight="bold" fill="#ff8c1a">T</text>
<path d="M1730 700.3L1742 690.5V699H1751V702H1742V710Z" fill="#2a25c4"/>
</g>
</svg>
<div class="chb" style="left:3px;top:984px;height:94px">
<div class="h" style="background:#1c1c1c;color:#f6ea37;height:20px">Ch 1</div>
<div style="position:absolute;left:0;top:19px;width:90px;height:2px;background:#9a9a9a"></div>
<div class="clip" style="top:21px">Clipping</div>
<svg style="position:absolute;left:0;top:21px" width="18" height="17" viewBox="0 0 18 17"><path d="M8.2 1.3L15.7 15.4H0.7Z" fill="#f8e71c" stroke="#3a3468" stroke-width="0.9" stroke-linejoin="round"/><rect x="7.5" y="4.8" width="1.5" height="8.4" fill="#8a8436"/></svg>
<div class="r" style="top:39.0px;">5 V/div</div>
<div class="r" style="top:57.8px;">1 M&#937;</div>
<div class="r" style="top:76.6px;">200 kHz</div>
<div class="bw" style="top:76px">B<span style="font-size:8px;position:relative;top:2px">w</span></div>
</div>
<div class="chb" style="left:98px;top:984px;height:94px">
<div class="h" style="background:#1f4144;color:#2fcfd8;height:20px">Ch 2</div>
<div style="position:absolute;left:0;top:19px;width:90px;height:2px;background:#9a9a9a"></div>
<div class="clip" style="top:21px">Clipping</div>
<svg style="position:absolute;left:0;top:21px" width="18" height="17" viewBox="0 0 18 17"><path d="M8.2 1.3L15.7 15.4H0.7Z" fill="#f8e71c" stroke="#3a3468" stroke-width="0.9" stroke-linejoin="round"/><rect x="7.5" y="4.8" width="1.5" height="8.4" fill="#8a8436"/></svg>
<div class="r" style="top:39.0px;">250 mV/div</div>
<div class="r" style="top:57.8px;">1 M&#937;</div>
<div class="r" style="top:76.6px;">200 kHz</div>
<div class="bw" style="top:76px">B<span style="font-size:8px;position:relative;top:2px">w</span></div>
</div>
<div class="chb" style="left:193px;top:984px;height:94px">
<div class="h" style="background:#47282c;color:#f4f0f0;height:20px">Ch 3</div>
<div style="position:absolute;left:0;top:19px;width:90px;height:2px;background:#9a9a9a"></div>
<div class="clip" style="top:21px">Clipping</div>
<svg style="position:absolute;left:0;top:21px" width="18" height="17" viewBox="0 0 18 17"><path d="M8.2 1.3L15.7 15.4H0.7Z" fill="#f8e71c" stroke="#3a3468" stroke-width="0.9" stroke-linejoin="round"/><rect x="7.5" y="4.8" width="1.5" height="8.4" fill="#8a8436"/></svg>
<div class="r" style="top:39.0px;">450 mV/div</div>
<div class="r" style="top:57.8px;">1 M&#937;</div>
<div class="r" style="top:76.6px;">200 kHz</div>
<div class="bw" style="top:76px">B<span style="font-size:8px;position:relative;top:2px">w</span></div>
</div>
<div class="chb" style="left:288px;top:1003px;height:75px">
<div class="h" style="background:#3a4a23;color:#8fd130;height:19px">Ch 4</div>
<div class="r" style="top:20.0px;">200 mV/div</div>
<div class="r" style="top:38.8px;">1 M&#937;</div>
<div class="r" style="top:57.6px;">200 kHz</div>
<div class="bw" style="top:57px">B<span style="font-size:8px;position:relative;top:2px">w</span></div>
</div>
<div class="chb" style="left:383px;top:1003px;height:75px">
<div class="h" style="background:#4a3321;color:#ff982a;height:19px">Ch 5</div>
<div class="r" style="top:20.0px;">1 V/div</div>
<div class="r" style="top:38.8px;">1 M&#937;</div>
<div class="r" style="top:57.6px;">200 kHz</div>
<div class="bw" style="top:57px">B<span style="font-size:8px;position:relative;top:2px">w</span></div>
</div>
<div class="chb" style="left:478px;top:984px;height:94px">
<div class="h" style="background:#2a25c4;color:#ffffff;height:20px">Ch 6</div>
<div style="position:absolute;left:0;top:19px;width:90px;height:2px;background:#9a9a9a"></div>
<div class="clip" style="top:21px">Clipping</div>
<svg style="position:absolute;left:0;top:21px" width="18" height="17" viewBox="0 0 18 17"><path d="M8.2 1.3L15.7 15.4H0.7Z" fill="#f8e71c" stroke="#3a3468" stroke-width="0.9" stroke-linejoin="round"/><rect x="7.5" y="4.8" width="1.5" height="8.4" fill="#8a8436"/></svg>
<div class="r" style="top:39.0px;">750 mV/div</div>
<div class="r" style="top:57.8px;">1 M&#937;</div>
<div class="r" style="top:76.6px;">200 kHz</div>
<div class="bw" style="top:76px">B<span style="font-size:8px;position:relative;top:2px">w</span></div>
</div>
<div class="chb" style="left:573px;top:1003px;height:75px">
<div class="h" style="background:#4a3321;color:#ff9a22;height:19px">Math 1</div>
<div class="r" style="top:20.0px;font-weight:bold;">74.1 mT/div</div>
<div class="r" style="top:38.8px;">Intg(Ch2)&#8230;</div>
</div>
<div class="chb" style="left:668px;top:1003px;height:75px">
<div class="h" style="background:#2e2033;color:#ffffff;height:19px">Math 2</div>
<div class="r" style="top:20.0px;font-weight:bold;">755.91 A/&#8230;</div>
<div class="r" style="top:38.8px;">-Intg(Ch3&#8230;</div>
</div>
<div class="sep" style="left:1118px;top:1000px;width:1px;height:78px"></div>
<div class="sep" style="left:1269px;top:1000px;width:1px;height:78px"></div>
<div class="sep" style="left:1811px;top:1000px;width:1px;height:78px"></div>
<div class="abtn" style="left:1129px"><i style="background:#c8282d"></i>Add<br>New<br>Math</div>
<div class="abtn" style="left:1174px"><i style="background:#c9cede"></i>Add<br>New<br>Ref</div>
<div class="abtn" style="left:1219px"><i style="background:#c864ff"></i>Add<br>New<br>Bus</div>
<div class="info" style="left:1280px;width:200px"><div class="h">Horizontal</div>
<div class="r" style="left:4px;top:20px">4 ms/div</div><div class="r" style="left:110px;top:20px">40 ms</div>
<div class="r" style="left:4px;top:39px">SR: 1 MS/s</div><div class="r" style="left:110px;top:39px">1 &#181;s/pt</div>
<div class="r" style="left:4px;top:58px">RL: 40 kpts</div><div class="r" style="left:124px;top:58px">3%</div>
<svg style="position:absolute;left:110px;top:59px" width="10" height="13" viewBox="0 0 10 13"><path d="M0.5 0.5H9.5V9H6.5L5 12L3.5 9H0.5Z" fill="#ff8c1a"/><rect x="2" y="2" width="6" height="6" fill="#000"/><path d="M2.8 2.8H7.2V4H5.6V7.4H4.4V4H2.8Z" fill="#fff"/></svg>
</div>
<div class="info" style="left:1485px;width:160px"><div class="h">Trigger</div>
<div style="position:absolute;left:4px;top:22px;width:31px;height:16px;border-radius:5px;background:#2a25c4;border:1px solid #111;color:#fff;font-size:15px;line-height:14px;text-align:center">6</div>
<svg style="position:absolute;left:44px;top:23px" width="18" height="13" viewBox="0 0 18 13"><path d="M0.5 10.5H5L11.5 1.5H16.5" fill="none" stroke="#3c3c8c" stroke-width="1.1"/></svg>
<div class="r" style="left:70px;top:20px">3 V</div>
</div>
<div class="info" style="left:1650px;width:151px"><div class="h">Acquisition</div>
<div class="r" style="left:4px;top:20px">Manual,</div><div class="r" style="left:85px;top:20px">Analyze</div>
<div class="r" style="left:4px;top:39px">High Res: 16 bits</div>
<div class="r" style="left:4px;top:58px">Single: 1 /1</div>
</div>
<div class="abs" style="left:1822px;top:999px;width:90px;height:36px;border-radius:7px;background:#ff1e26;border:1px solid #6a4a48;color:#fff;font-weight:bold;font-size:14px;line-height:31px;text-align:center;letter-spacing:0.35px;-webkit-text-stroke:0.5px #fff">Stopped</div>
<div class="abs" style="left:1822px;top:1041px;width:90px;height:38px;border-radius:5px;background:#c9c9c9;color:#111;font-size:15.2px;line-height:16.6px;text-align:center;padding-top:0.5px;letter-spacing:-0.1px">16 Apr 2025<br>4:14:31 PM</div>
</body></html>
